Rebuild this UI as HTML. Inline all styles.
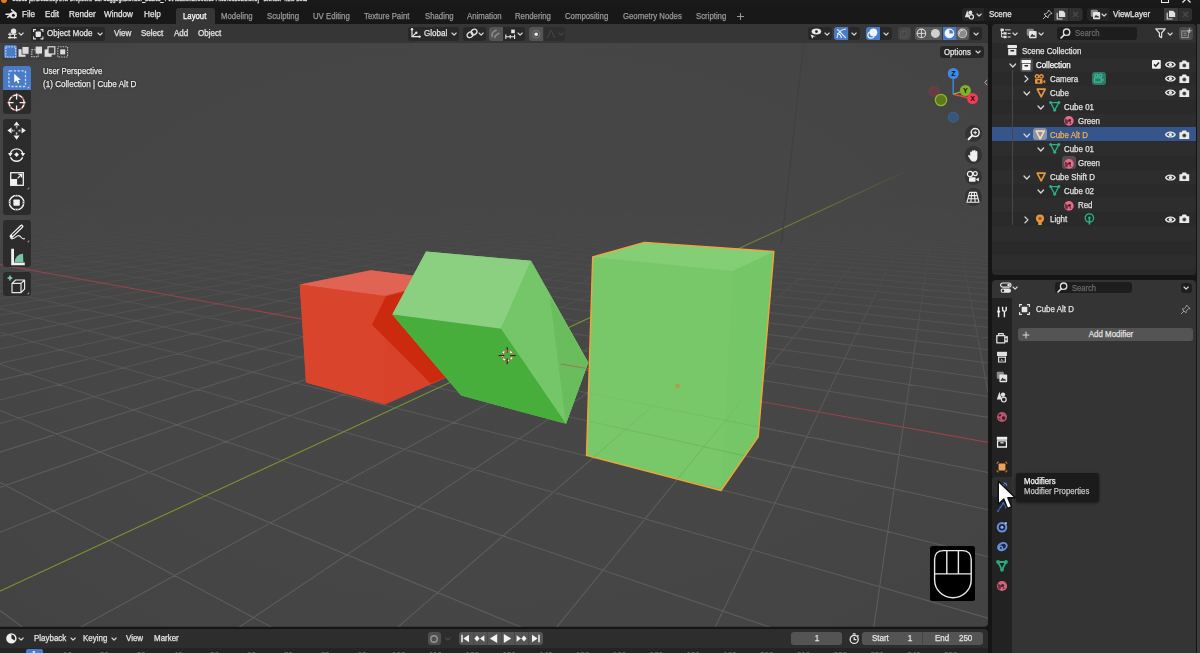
<!DOCTYPE html>
<html><head><meta charset="utf-8"><title>Blender</title>
<style>
html,body{margin:0;padding:0}
body{width:1200px;height:653px;position:relative;overflow:hidden;background:#151515;font-family:"Liberation Sans",sans-serif;font-size:9px;color:#e6e6e6}
div,svg{box-sizing:border-box}
svg{overflow:visible}
</style></head><body>
<svg style="position:absolute;left:0px;top:0px;" width="1200" height="653" viewBox="0 0 1200 653"><defs><clipPath id="vp"><rect x="-6" y="24" width="994" height="602.8" rx="4"/></clipPath><radialGradient id="vig" cx="0.5" cy="0.5" r="0.75"><stop offset="0" stop-color="#474747"/><stop offset="0.6" stop-color="#464646"/><stop offset="1" stop-color="#424242"/></radialGradient><linearGradient id="fade" x1="0" y1="0" x2="0" y2="1" gradientUnits="objectBoundingBox"><stop offset="0.0000" stop-color="rgb(0,0,0)"/><stop offset="0.2919" stop-color="rgb(0,0,0)"/><stop offset="0.3748" stop-color="rgb(38,38,38)"/><stop offset="0.4577" stop-color="rgb(107,107,107)"/><stop offset="0.5572" stop-color="rgb(183,183,183)"/><stop offset="0.7065" stop-color="rgb(242,242,242)"/><stop offset="0.8226" stop-color="rgb(255,255,255)"/><stop offset="1.0000" stop-color="rgb(255,255,255)"/></linearGradient><mask id="gm" maskUnits="userSpaceOnUse" x="0" y="24" width="988" height="603"><rect x="0" y="24" width="988" height="603" fill="url(#fade)"/></mask><linearGradient id="fade2" x1="0" y1="0" x2="0" y2="1" gradientUnits="objectBoundingBox"><stop offset="0.0000" stop-color="rgb(0,0,0)"/><stop offset="0.2388" stop-color="rgb(0,0,0)"/><stop offset="0.3167" stop-color="rgb(178,178,178)"/><stop offset="0.4411" stop-color="rgb(255,255,255)"/><stop offset="1.0000" stop-color="rgb(255,255,255)"/></linearGradient><mask id="am" maskUnits="userSpaceOnUse" x="0" y="24" width="988" height="603"><rect x="0" y="24" width="988" height="603" fill="url(#fade2)"/></mask><linearGradient id="fade3" x1="0" y1="380" x2="0" y2="450" gradientUnits="userSpaceOnUse"><stop offset="0" stop-color="#000"/><stop offset="1" stop-color="#fff"/></linearGradient><mask id="bm" maskUnits="userSpaceOnUse" x="0" y="24" width="988" height="603"><rect x="0" y="24" width="988" height="603" fill="url(#fade3)"/></mask></defs><g clip-path="url(#vp)"><rect x="0" y="24" width="988" height="603" fill="url(#vig)"/><g mask="url(#gm)"><path d="M-171566.5 6888.2L777.9 160.3M-169309.6 6888.2L779.9 160.3M-167052.8 6888.2L781.8 160.3M-164795.9 6888.2L783.8 160.3M-162539.0 6888.2L785.7 160.4M-160282.2 6888.2L787.7 160.4M-158025.3 6888.2L789.6 160.4M-155768.4 6888.2L791.6 160.4M-153511.6 6888.2L793.6 160.4M-151254.7 6888.2L795.6 160.4M-148997.8 6888.2L797.5 160.4M-146741.0 6888.2L799.5 160.4M-144484.1 6888.2L801.5 160.4M-142227.2 6888.2L803.5 160.4M-139970.4 6888.2L805.5 160.4M-137713.5 6888.2L807.5 160.5M-135456.6 6888.2L809.6 160.5M-133199.8 6888.2L811.6 160.5M-130942.9 6888.2L813.6 160.5M-128686.0 6888.2L815.7 160.5M-126429.2 6888.2L817.7 160.5M-124172.3 6888.2L819.7 160.5M-121915.4 6888.2L821.8 160.5M-119658.6 6888.2L823.9 160.5M-117401.7 6888.2L825.9 160.5M-115144.8 6888.2L828.0 160.6M-112888.0 6888.2L830.1 160.6M-110631.1 6888.2L832.1 160.6M-108374.2 6888.2L834.2 160.6M-106117.4 6888.2L836.3 160.6M-103860.5 6888.2L838.4 160.6M-101603.6 6888.2L840.5 160.6M-99346.8 6888.2L842.7 160.6M-97089.9 6888.2L844.8 160.6M-94833.0 6888.2L846.9 160.6M-92576.2 6888.2L849.0 160.6M-90319.3 6888.2L851.2 160.7M-88062.4 6888.2L853.3 160.7M-85805.6 6888.2L855.5 160.7M-83548.7 6888.2L857.6 160.7M-81291.8 6888.2L859.8 160.7M-79035.0 6888.2L862.0 160.7M-76778.1 6888.2L864.1 160.7M-74521.2 6888.2L866.3 160.7M-72264.4 6888.2L868.5 160.7M-70007.5 6888.2L870.7 160.7M-67750.6 6888.2L872.9 160.8M-65493.8 6888.2L875.1 160.8M-63236.9 6888.2L877.3 160.8M-60980.0 6888.2L879.5 160.8M-58723.2 6888.2L881.8 160.8M-56466.3 6888.2L884.0 160.8M-54209.4 6888.2L886.2 160.8M-51952.6 6888.2L888.5 160.8M-49695.7 6888.2L890.7 160.8M-47438.8 6888.2L893.0 160.9M-45182.0 6888.2L895.3 160.9M-42925.1 6888.2L897.5 160.9M-40668.2 6888.2L899.8 160.9M-38411.4 6888.2L902.1 160.9M-36154.5 6888.2L904.4 160.9M-33897.6 6888.2L906.7 160.9M-31640.8 6888.2L909.0 160.9M-29383.9 6888.2L911.3 160.9M-27127.0 6888.2L913.7 160.9M-24870.2 6888.2L916.0 161.0M-22613.3 6888.2L918.3 161.0M-20356.4 6888.2L920.7 161.0M-18099.6 6888.2L923.0 161.0M-15842.7 6888.2L925.4 161.0M-11329.0 6888.2L930.1 161.0M-9072.1 6888.2L932.5 161.0M-6815.2 6888.2L934.9 161.0M-4558.4 6888.2L937.3 161.1M-2301.5 6888.2L939.7 161.1M-44.6 6888.2L942.1 161.1M2212.2 6888.2L944.5 161.1M4469.1 6888.2L947.0 161.1M6726.0 6888.2L949.4 161.1M8982.8 6888.2L951.8 161.1M11239.7 6888.2L954.3 161.1M13496.6 6888.2L956.7 161.1M15753.4 6888.2L959.2 161.2M18010.3 6888.2L961.7 161.2M20267.2 6888.2L964.2 161.2M22524.0 6888.2L966.6 161.2M24780.9 6888.2L969.1 161.2M27037.8 6888.2L971.6 161.2M29294.6 6888.2L974.1 161.2M31551.5 6888.2L976.7 161.2M33808.4 6888.2L979.2 161.3M36065.2 6888.2L981.7 161.3M38322.1 6888.2L984.3 161.3M40579.0 6888.2L986.8 161.3M42835.8 6888.2L989.4 161.3M45092.7 6888.2L991.9 161.3M47349.6 6888.2L994.5 161.3M49606.4 6888.2L997.1 161.3M51863.3 6888.2L999.7 161.3M54120.2 6888.2L1002.3 161.4M56377.0 6888.2L1004.9 161.4M58633.9 6888.2L1007.5 161.4M60890.8 6888.2L1010.2 161.4M63147.6 6888.2L1012.8 161.4M65404.5 6888.2L1015.4 161.4M67661.4 6888.2L1018.1 161.4M69918.2 6888.2L1020.7 161.4M72175.1 6888.2L1023.4 161.5M74432.0 6888.2L1026.1 161.5M76688.8 6888.2L1028.8 161.5M78945.7 6888.2L1031.5 161.5M81202.6 6888.2L1034.2 161.5M83459.4 6888.2L1036.9 161.5M85716.3 6888.2L1039.6 161.5M87973.2 6888.2L1042.3 161.5M90230.0 6888.2L1045.1 161.6M92486.9 6888.2L1047.8 161.6M94743.8 6888.2L1050.6 161.6M97000.6 6888.2L1053.3 161.6M99257.5 6888.2L1056.1 161.6M101514.4 6888.2L1058.9 161.6M103771.2 6888.2L1061.7 161.6M106028.1 6888.2L1064.5 161.6M108285.0 6888.2L1067.3 161.7M110541.8 6888.2L1070.1 161.7M112798.7 6888.2L1073.0 161.7M115055.6 6888.2L1075.8 161.7M117312.4 6888.2L1078.7 161.7M119569.3 6888.2L1081.5 161.7M121826.2 6888.2L1084.4 161.7M124083.0 6888.2L1087.3 161.8M126339.9 6888.2L1090.2 161.8M128596.8 6888.2L1093.1 161.8M130853.6 6888.2L1096.0 161.8M133110.5 6888.2L1098.9 161.8M135367.4 6888.2L1101.8 161.8M137624.2 6888.2L1104.8 161.8M139881.1 6888.2L1107.7 161.8M142138.0 6888.2L1110.7 161.9M144394.8 6888.2L1113.7 161.9M-211351.1 6888.2L-1081.5 168.7M-207805.6 6888.2L-1071.3 168.7M-204260.0 6888.2L-1061.3 168.6M-200714.4 6888.2L-1051.4 168.5M-197168.9 6888.2L-1041.6 168.4M-193623.3 6888.2L-1031.9 168.4M-190077.8 6888.2L-1022.3 168.3M-186532.2 6888.2L-1012.8 168.2M-182986.7 6888.2L-1003.3 168.2M-179441.1 6888.2L-994.0 168.1M-175895.6 6888.2L-984.7 168.0M-172350.0 6888.2L-975.5 168.0M-168804.5 6888.2L-966.5 167.9M-165258.9 6888.2L-957.5 167.8M-161713.4 6888.2L-948.6 167.8M-158167.8 6888.2L-939.7 167.7M-154622.2 6888.2L-931.0 167.6M-151076.7 6888.2L-922.3 167.6M-147531.1 6888.2L-913.7 167.5M-143985.6 6888.2L-905.2 167.4M-140440.0 6888.2L-896.8 167.4M-136894.5 6888.2L-888.4 167.3M-133348.9 6888.2L-880.2 167.3M-129803.4 6888.2L-872.0 167.2M-126257.8 6888.2L-863.8 167.1M-122712.3 6888.2L-855.8 167.1M-119166.7 6888.2L-847.8 167.0M-115621.1 6888.2L-839.9 167.0M-112075.6 6888.2L-832.0 166.9M-108530.0 6888.2L-824.2 166.8M-104984.5 6888.2L-816.5 166.8M-101438.9 6888.2L-808.9 166.7M-97893.4 6888.2L-801.3 166.7M-94347.8 6888.2L-793.8 166.6M-90802.3 6888.2L-786.4 166.6M-87256.7 6888.2L-779.0 166.5M-83711.2 6888.2L-771.7 166.5M-80165.6 6888.2L-764.4 166.4M-76620.1 6888.2L-757.2 166.4M-73074.5 6888.2L-750.1 166.3M-69528.9 6888.2L-743.0 166.2M-65983.4 6888.2L-736.0 166.2M-62437.8 6888.2L-729.0 166.1M-58892.3 6888.2L-722.1 166.1M-55346.7 6888.2L-715.3 166.0M-51801.2 6888.2L-708.5 166.0M-48255.6 6888.2L-701.7 165.9M-44710.1 6888.2L-695.1 165.9M-41164.5 6888.2L-688.4 165.8M-37619.0 6888.2L-681.9 165.8M-34073.4 6888.2L-675.4 165.8M-30527.8 6888.2L-668.9 165.7M-26982.3 6888.2L-662.5 165.7M-23436.7 6888.2L-656.1 165.6M-19891.2 6888.2L-649.8 165.6M-16345.6 6888.2L-643.5 165.5M-12800.1 6888.2L-637.3 165.5M-9254.5 6888.2L-631.1 165.4M-5709.0 6888.2L-625.0 165.4M-2163.4 6888.2L-619.0 165.3M1382.1 6888.2L-612.9 165.3M4927.7 6888.2L-607.0 165.3M8473.2 6888.2L-601.0 165.2M12018.8 6888.2L-595.1 165.2M15564.4 6888.2L-589.3 165.1M19109.9 6888.2L-583.5 165.1M22655.5 6888.2L-577.7 165.0M26201.0 6888.2L-572.0 165.0M29746.6 6888.2L-566.4 165.0M33292.1 6888.2L-560.7 164.9M40383.2 6888.2L-549.6 164.8M43928.8 6888.2L-544.1 164.8M47474.3 6888.2L-538.6 164.7M51019.9 6888.2L-533.2 164.7M54565.5 6888.2L-527.8 164.7M58111.0 6888.2L-522.5 164.6M61656.6 6888.2L-517.2 164.6M65202.1 6888.2L-511.9 164.6M68747.7 6888.2L-506.7 164.5M72293.2 6888.2L-501.5 164.5M75838.8 6888.2L-496.3 164.4M79384.3 6888.2L-491.2 164.4M82929.9 6888.2L-486.1 164.4M86475.4 6888.2L-481.1 164.3M90021.0 6888.2L-476.1 164.3M93566.5 6888.2L-471.1 164.3M97112.1 6888.2L-466.2 164.2M100657.7 6888.2L-461.3 164.2M104203.2 6888.2L-456.4 164.1M107748.8 6888.2L-451.6 164.1M111294.3 6888.2L-446.7 164.1M114839.9 6888.2L-442.0 164.0M118385.4 6888.2L-437.2 164.0M121931.0 6888.2L-432.5 164.0M125476.5 6888.2L-427.9 163.9M129022.1 6888.2L-423.2 163.9M132567.6 6888.2L-418.6 163.9M136113.2 6888.2L-414.0 163.8M139658.7 6888.2L-409.5 163.8M143204.3 6888.2L-404.9 163.8M146749.9 6888.2L-400.5 163.7M150295.4 6888.2L-396.0 163.7M153841.0 6888.2L-391.6 163.7M157386.5 6888.2L-387.2 163.6M160932.1 6888.2L-382.8 163.6M164477.6 6888.2L-378.5 163.6M168023.2 6888.2L-374.1 163.5M171568.7 6888.2L-369.8 163.5M175114.3 6888.2L-365.6 163.5M178659.8 6888.2L-361.4 163.4M182205.4 6888.2L-357.2 163.4M185751.0 6888.2L-353.0 163.4M189296.5 6888.2L-348.8 163.4M192842.1 6888.2L-344.7 163.3M196387.6 6888.2L-340.6 163.3M199933.2 6888.2L-336.5 163.3M203478.7 6888.2L-332.5 163.2M207024.3 6888.2L-328.5 163.2M210569.8 6888.2L-324.5 163.2M214115.4 6888.2L-320.5 163.1M217660.9 6888.2L-316.6 163.1M221206.5 6888.2L-312.6 163.1M224752.0 6888.2L-308.7 163.1M228297.6 6888.2L-304.9 163.0M231843.2 6888.2L-301.0 163.0M235388.7 6888.2L-297.2 163.0M238934.3 6888.2L-293.4 162.9M242479.8 6888.2L-289.6 162.9M246025.4 6888.2L-285.9 162.9M249570.9 6888.2L-282.1 162.9M253116.5 6888.2L-278.4 162.8M256662.0 6888.2L-274.7 162.8M260207.6 6888.2L-271.1 162.8M263753.1 6888.2L-267.4 162.8M267298.7 6888.2L-263.8 162.7M270844.3 6888.2L-260.2 162.7M274389.8 6888.2L-256.6 162.7M277935.4 6888.2L-253.1 162.7M281480.9 6888.2L-249.5 162.6M285026.5 6888.2L-246.0 162.6" stroke="#626262" stroke-width="1.05" fill="none" opacity="0.85"/></g><g mask="url(#am)"><path d="M-13585.8 6888.2L927.8 161.0" stroke="#78932f" stroke-width="1.15" fill="none"/><path d="M36837.7 6888.2L-555.1 164.9" stroke="#96434c" stroke-width="1.15" fill="none"/></g><path d="M804 40L781.5 243" stroke="#3f3f3f" stroke-width="1" fill="none"/><polygon points="299.8,284.5 370.8,270.3 462.0,281.8 462.0,370.5 384.9,404.4 306.0,382.5" fill="#d9442b"/><polygon points="299.8,284.5 370.8,270.3 462.0,281.8 462.0,276.5 384.3,296.1" fill="#e06354"/><polygon points="299.8,284.5 384.3,296.1 384.9,404.4 306.0,382.5" fill="#d9452c"/><polygon points="384.3,296.1 462.0,276.5 462.0,370.5 384.9,404.4" fill="#d8422a"/><polygon points="385.9,296.5 371.9,324.8 430.6,383.4 462.0,370.5 462.0,277.0" fill="#cc2a0e"/><polygon points="426.0,251.6 531.0,260.8 588.3,362.5 566.0,423.8 461.2,395.6 392.3,314.4" fill="#6cc060"/><polygon points="426.0,251.6 531.0,260.8 501.0,328.8 392.3,314.4" fill="#8bcf80"/><polygon points="531.0,260.8 588.3,362.5 566.0,423.8 501.0,328.8" fill="#74c668"/><polygon points="550.0,297.0 588.3,362.5 566.0,423.8" fill="#69bd5c"/><polygon points="392.3,314.4 501.0,328.8 566.0,423.8 461.2,395.6" fill="#47ad3b"/><path d="M560.8 364L588 368.7" stroke="#a86a50" stroke-width="1" opacity="0.8"/><polygon points="592.7,256.9 644.4,242.4 773.9,251.5 758.2,436.8 721.0,490.5 586.5,455.4" fill="#78c86a"/><polygon points="592.7,256.9 644.4,242.4 773.9,251.5 733.0,271.0" fill="#84cf76"/><polygon points="733.0,271.0 773.9,251.5 758.2,436.8 721.0,490.5" fill="#75c667"/><clipPath id="bx"><polygon points="592.7,256.9 644.4,242.4 773.9,251.5 758.2,436.8 721.0,490.5 586.5,455.4"/></clipPath><g clip-path="url(#bx)"><path d="M-171566.5 6888.2L777.9 160.3M-169309.6 6888.2L779.9 160.3M-167052.8 6888.2L781.8 160.3M-164795.9 6888.2L783.8 160.3M-162539.0 6888.2L785.7 160.4M-160282.2 6888.2L787.7 160.4M-158025.3 6888.2L789.6 160.4M-155768.4 6888.2L791.6 160.4M-153511.6 6888.2L793.6 160.4M-151254.7 6888.2L795.6 160.4M-148997.8 6888.2L797.5 160.4M-146741.0 6888.2L799.5 160.4M-144484.1 6888.2L801.5 160.4M-142227.2 6888.2L803.5 160.4M-139970.4 6888.2L805.5 160.4M-137713.5 6888.2L807.5 160.5M-135456.6 6888.2L809.6 160.5M-133199.8 6888.2L811.6 160.5M-130942.9 6888.2L813.6 160.5M-128686.0 6888.2L815.7 160.5M-126429.2 6888.2L817.7 160.5M-124172.3 6888.2L819.7 160.5M-121915.4 6888.2L821.8 160.5M-119658.6 6888.2L823.9 160.5M-117401.7 6888.2L825.9 160.5M-115144.8 6888.2L828.0 160.6M-112888.0 6888.2L830.1 160.6M-110631.1 6888.2L832.1 160.6M-108374.2 6888.2L834.2 160.6M-106117.4 6888.2L836.3 160.6M-103860.5 6888.2L838.4 160.6M-101603.6 6888.2L840.5 160.6M-99346.8 6888.2L842.7 160.6M-97089.9 6888.2L844.8 160.6M-94833.0 6888.2L846.9 160.6M-92576.2 6888.2L849.0 160.6M-90319.3 6888.2L851.2 160.7M-88062.4 6888.2L853.3 160.7M-85805.6 6888.2L855.5 160.7M-83548.7 6888.2L857.6 160.7M-81291.8 6888.2L859.8 160.7M-79035.0 6888.2L862.0 160.7M-76778.1 6888.2L864.1 160.7M-74521.2 6888.2L866.3 160.7M-72264.4 6888.2L868.5 160.7M-70007.5 6888.2L870.7 160.7M-67750.6 6888.2L872.9 160.8M-65493.8 6888.2L875.1 160.8M-63236.9 6888.2L877.3 160.8M-60980.0 6888.2L879.5 160.8M-58723.2 6888.2L881.8 160.8M-56466.3 6888.2L884.0 160.8M-54209.4 6888.2L886.2 160.8M-51952.6 6888.2L888.5 160.8M-49695.7 6888.2L890.7 160.8M-47438.8 6888.2L893.0 160.9M-45182.0 6888.2L895.3 160.9M-42925.1 6888.2L897.5 160.9M-40668.2 6888.2L899.8 160.9M-38411.4 6888.2L902.1 160.9M-36154.5 6888.2L904.4 160.9M-33897.6 6888.2L906.7 160.9M-31640.8 6888.2L909.0 160.9M-29383.9 6888.2L911.3 160.9M-27127.0 6888.2L913.7 160.9M-24870.2 6888.2L916.0 161.0M-22613.3 6888.2L918.3 161.0M-20356.4 6888.2L920.7 161.0M-18099.6 6888.2L923.0 161.0M-15842.7 6888.2L925.4 161.0M-11329.0 6888.2L930.1 161.0M-9072.1 6888.2L932.5 161.0M-6815.2 6888.2L934.9 161.0M-4558.4 6888.2L937.3 161.1M-2301.5 6888.2L939.7 161.1M-44.6 6888.2L942.1 161.1M2212.2 6888.2L944.5 161.1M4469.1 6888.2L947.0 161.1M6726.0 6888.2L949.4 161.1M8982.8 6888.2L951.8 161.1M11239.7 6888.2L954.3 161.1M13496.6 6888.2L956.7 161.1M15753.4 6888.2L959.2 161.2M18010.3 6888.2L961.7 161.2M20267.2 6888.2L964.2 161.2M22524.0 6888.2L966.6 161.2M24780.9 6888.2L969.1 161.2M27037.8 6888.2L971.6 161.2M29294.6 6888.2L974.1 161.2M31551.5 6888.2L976.7 161.2M33808.4 6888.2L979.2 161.3M36065.2 6888.2L981.7 161.3M38322.1 6888.2L984.3 161.3M40579.0 6888.2L986.8 161.3M42835.8 6888.2L989.4 161.3M45092.7 6888.2L991.9 161.3M47349.6 6888.2L994.5 161.3M49606.4 6888.2L997.1 161.3M51863.3 6888.2L999.7 161.3M54120.2 6888.2L1002.3 161.4M56377.0 6888.2L1004.9 161.4M58633.9 6888.2L1007.5 161.4M60890.8 6888.2L1010.2 161.4M63147.6 6888.2L1012.8 161.4M65404.5 6888.2L1015.4 161.4M67661.4 6888.2L1018.1 161.4M69918.2 6888.2L1020.7 161.4M72175.1 6888.2L1023.4 161.5M74432.0 6888.2L1026.1 161.5M76688.8 6888.2L1028.8 161.5M78945.7 6888.2L1031.5 161.5M81202.6 6888.2L1034.2 161.5M83459.4 6888.2L1036.9 161.5M85716.3 6888.2L1039.6 161.5M87973.2 6888.2L1042.3 161.5M90230.0 6888.2L1045.1 161.6M92486.9 6888.2L1047.8 161.6M94743.8 6888.2L1050.6 161.6M97000.6 6888.2L1053.3 161.6M99257.5 6888.2L1056.1 161.6M101514.4 6888.2L1058.9 161.6M103771.2 6888.2L1061.7 161.6M106028.1 6888.2L1064.5 161.6M108285.0 6888.2L1067.3 161.7M110541.8 6888.2L1070.1 161.7M112798.7 6888.2L1073.0 161.7M115055.6 6888.2L1075.8 161.7M117312.4 6888.2L1078.7 161.7M119569.3 6888.2L1081.5 161.7M121826.2 6888.2L1084.4 161.7M124083.0 6888.2L1087.3 161.8M126339.9 6888.2L1090.2 161.8M128596.8 6888.2L1093.1 161.8M130853.6 6888.2L1096.0 161.8M133110.5 6888.2L1098.9 161.8M135367.4 6888.2L1101.8 161.8M137624.2 6888.2L1104.8 161.8M139881.1 6888.2L1107.7 161.8M142138.0 6888.2L1110.7 161.9M144394.8 6888.2L1113.7 161.9M-211351.1 6888.2L-1081.5 168.7M-207805.6 6888.2L-1071.3 168.7M-204260.0 6888.2L-1061.3 168.6M-200714.4 6888.2L-1051.4 168.5M-197168.9 6888.2L-1041.6 168.4M-193623.3 6888.2L-1031.9 168.4M-190077.8 6888.2L-1022.3 168.3M-186532.2 6888.2L-1012.8 168.2M-182986.7 6888.2L-1003.3 168.2M-179441.1 6888.2L-994.0 168.1M-175895.6 6888.2L-984.7 168.0M-172350.0 6888.2L-975.5 168.0M-168804.5 6888.2L-966.5 167.9M-165258.9 6888.2L-957.5 167.8M-161713.4 6888.2L-948.6 167.8M-158167.8 6888.2L-939.7 167.7M-154622.2 6888.2L-931.0 167.6M-151076.7 6888.2L-922.3 167.6M-147531.1 6888.2L-913.7 167.5M-143985.6 6888.2L-905.2 167.4M-140440.0 6888.2L-896.8 167.4M-136894.5 6888.2L-888.4 167.3M-133348.9 6888.2L-880.2 167.3M-129803.4 6888.2L-872.0 167.2M-126257.8 6888.2L-863.8 167.1M-122712.3 6888.2L-855.8 167.1M-119166.7 6888.2L-847.8 167.0M-115621.1 6888.2L-839.9 167.0M-112075.6 6888.2L-832.0 166.9M-108530.0 6888.2L-824.2 166.8M-104984.5 6888.2L-816.5 166.8M-101438.9 6888.2L-808.9 166.7M-97893.4 6888.2L-801.3 166.7M-94347.8 6888.2L-793.8 166.6M-90802.3 6888.2L-786.4 166.6M-87256.7 6888.2L-779.0 166.5M-83711.2 6888.2L-771.7 166.5M-80165.6 6888.2L-764.4 166.4M-76620.1 6888.2L-757.2 166.4M-73074.5 6888.2L-750.1 166.3M-69528.9 6888.2L-743.0 166.2M-65983.4 6888.2L-736.0 166.2M-62437.8 6888.2L-729.0 166.1M-58892.3 6888.2L-722.1 166.1M-55346.7 6888.2L-715.3 166.0M-51801.2 6888.2L-708.5 166.0M-48255.6 6888.2L-701.7 165.9M-44710.1 6888.2L-695.1 165.9M-41164.5 6888.2L-688.4 165.8M-37619.0 6888.2L-681.9 165.8M-34073.4 6888.2L-675.4 165.8M-30527.8 6888.2L-668.9 165.7M-26982.3 6888.2L-662.5 165.7M-23436.7 6888.2L-656.1 165.6M-19891.2 6888.2L-649.8 165.6M-16345.6 6888.2L-643.5 165.5M-12800.1 6888.2L-637.3 165.5M-9254.5 6888.2L-631.1 165.4M-5709.0 6888.2L-625.0 165.4M-2163.4 6888.2L-619.0 165.3M1382.1 6888.2L-612.9 165.3M4927.7 6888.2L-607.0 165.3M8473.2 6888.2L-601.0 165.2M12018.8 6888.2L-595.1 165.2M15564.4 6888.2L-589.3 165.1M19109.9 6888.2L-583.5 165.1M22655.5 6888.2L-577.7 165.0M26201.0 6888.2L-572.0 165.0M29746.6 6888.2L-566.4 165.0M33292.1 6888.2L-560.7 164.9M40383.2 6888.2L-549.6 164.8M43928.8 6888.2L-544.1 164.8M47474.3 6888.2L-538.6 164.7M51019.9 6888.2L-533.2 164.7M54565.5 6888.2L-527.8 164.7M58111.0 6888.2L-522.5 164.6M61656.6 6888.2L-517.2 164.6M65202.1 6888.2L-511.9 164.6M68747.7 6888.2L-506.7 164.5M72293.2 6888.2L-501.5 164.5M75838.8 6888.2L-496.3 164.4M79384.3 6888.2L-491.2 164.4M82929.9 6888.2L-486.1 164.4M86475.4 6888.2L-481.1 164.3M90021.0 6888.2L-476.1 164.3M93566.5 6888.2L-471.1 164.3M97112.1 6888.2L-466.2 164.2M100657.7 6888.2L-461.3 164.2M104203.2 6888.2L-456.4 164.1M107748.8 6888.2L-451.6 164.1M111294.3 6888.2L-446.7 164.1M114839.9 6888.2L-442.0 164.0M118385.4 6888.2L-437.2 164.0M121931.0 6888.2L-432.5 164.0M125476.5 6888.2L-427.9 163.9M129022.1 6888.2L-423.2 163.9M132567.6 6888.2L-418.6 163.9M136113.2 6888.2L-414.0 163.8M139658.7 6888.2L-409.5 163.8M143204.3 6888.2L-404.9 163.8M146749.9 6888.2L-400.5 163.7M150295.4 6888.2L-396.0 163.7M153841.0 6888.2L-391.6 163.7M157386.5 6888.2L-387.2 163.6M160932.1 6888.2L-382.8 163.6M164477.6 6888.2L-378.5 163.6M168023.2 6888.2L-374.1 163.5M171568.7 6888.2L-369.8 163.5M175114.3 6888.2L-365.6 163.5M178659.8 6888.2L-361.4 163.4M182205.4 6888.2L-357.2 163.4M185751.0 6888.2L-353.0 163.4M189296.5 6888.2L-348.8 163.4M192842.1 6888.2L-344.7 163.3M196387.6 6888.2L-340.6 163.3M199933.2 6888.2L-336.5 163.3M203478.7 6888.2L-332.5 163.2M207024.3 6888.2L-328.5 163.2M210569.8 6888.2L-324.5 163.2M214115.4 6888.2L-320.5 163.1M217660.9 6888.2L-316.6 163.1M221206.5 6888.2L-312.6 163.1M224752.0 6888.2L-308.7 163.1M228297.6 6888.2L-304.9 163.0M231843.2 6888.2L-301.0 163.0M235388.7 6888.2L-297.2 163.0M238934.3 6888.2L-293.4 162.9M242479.8 6888.2L-289.6 162.9M246025.4 6888.2L-285.9 162.9M249570.9 6888.2L-282.1 162.9M253116.5 6888.2L-278.4 162.8M256662.0 6888.2L-274.7 162.8M260207.6 6888.2L-271.1 162.8M263753.1 6888.2L-267.4 162.8M267298.7 6888.2L-263.8 162.7M270844.3 6888.2L-260.2 162.7M274389.8 6888.2L-256.6 162.7M277935.4 6888.2L-253.1 162.7M281480.9 6888.2L-249.5 162.6M285026.5 6888.2L-246.0 162.6" stroke="#5f9f55" stroke-width="0.9" fill="none" opacity="0.5" mask="url(#bm)"/></g><polygon points="592.7,256.9 644.4,242.4 773.9,251.5 758.2,436.8 721.0,490.5 586.5,455.4" fill="none" stroke="#f2a43c" stroke-width="1.4" stroke-linejoin="round"/><circle cx="677.5" cy="386" r="1.7" fill="none" stroke="#e8742a" stroke-width="0.9"/><g transform="translate(507.2,355.6)"><circle r="5" fill="none" stroke="#fff" stroke-width="1.3"/><circle r="5" fill="none" stroke="#e03030" stroke-width="1.3" stroke-dasharray="2 2"/><path d="M-8.5 0H-3M3 0H8.5M0 -8.5V-3M0 3V8.5" stroke="#1a1a1a" stroke-width="1"/></g></g></svg>
<div style="position:absolute;left:0px;top:0px;width:1200px;height:4.5px;background:#1a1a1a;border-radius:0px;"></div>
<div style="position:absolute;left:0;top:0;width:1200px;height:4.5px;overflow:hidden"><div style="position:absolute;left:1px;top:-3px;width:6px;height:6px;background:#e87d0d;border-radius:3px"></div><div style="position:absolute;left:12px;top:-4.6px;font-size:7.5px;line-height:8px;color:#e8e8e8;white-space:nowrap;transform:scaleX(0.70);transform-origin:0 0;-webkit-text-stroke:0.3px #e8e8e8">Cubes [E:\Dessktop\Inc. Dropbox\Paul Caggegi\Blender_Basics_4-0\Additional\Course Files\Cubes.blend] - Blender 4.2.0 Beta</div><div style="position:absolute;left:1161px;top:-4px;width:8px;height:7px;border:1.3px solid #eee"></div><svg style="position:absolute;left:1182px;top:-6px" width="9" height="9"><path d="M0.5 0.5L8.5 8.5M8.5 0.5L0.5 8.5" stroke="#eee" stroke-width="1.3"/></svg></div>
<div style="position:absolute;left:0px;top:4.5px;width:1200px;height:19.5px;background:#181818;border-radius:0px;"></div>
<svg style="position:absolute;left:5px;top:9px;" width="13" height="11" viewBox="0 0 13 11"><path d="M6.6 0.8L11 4.3M1 5.2H6.5M2.8 8.2L5.3 6.2" stroke="#e8e8e8" stroke-width="1.5" fill="none" stroke-linecap="round"/><ellipse cx="8.3" cy="6.2" rx="3.6" ry="3.3" fill="#e8e8e8"/><circle cx="8.4" cy="6.2" r="1.5" fill="#181818"/></svg>
<div style="position:absolute;left:22.3px;top:9.20px;font-size:9px;line-height:10.80px;color:#e6e6e6;white-space:nowrap;-webkit-text-stroke:0.25px #e6e6e6;transform:scaleX(0.905);transform-origin:0 50%;">File</div>
<div style="position:absolute;left:45.3px;top:9.20px;font-size:9px;line-height:10.80px;color:#e6e6e6;white-space:nowrap;-webkit-text-stroke:0.25px #e6e6e6;transform:scaleX(0.905);transform-origin:0 50%;">Edit</div>
<div style="position:absolute;left:68.8px;top:9.20px;font-size:9px;line-height:10.80px;color:#e6e6e6;white-space:nowrap;-webkit-text-stroke:0.25px #e6e6e6;transform:scaleX(0.905);transform-origin:0 50%;">Render</div>
<div style="position:absolute;left:104.3px;top:9.20px;font-size:9px;line-height:10.80px;color:#e6e6e6;white-space:nowrap;-webkit-text-stroke:0.25px #e6e6e6;transform:scaleX(0.905);transform-origin:0 50%;">Window</div>
<div style="position:absolute;left:143.6px;top:9.20px;font-size:9px;line-height:10.80px;color:#e6e6e6;white-space:nowrap;-webkit-text-stroke:0.25px #e6e6e6;transform:scaleX(0.905);transform-origin:0 50%;">Help</div>
<div style="position:absolute;left:176px;top:8px;width:38.5px;height:16px;background:#363636;border-radius:0px;border-radius:3px 3px 0 0"></div>
<div style="position:absolute;left:183px;top:11.14px;font-size:8.6px;line-height:10.32px;color:#ffffff;white-space:nowrap;-webkit-text-stroke:0.25px #ffffff;transform:scaleX(0.905);transform-origin:0 50%;">Layout</div>
<div style="position:absolute;left:220.5px;top:11.14px;font-size:8.6px;line-height:10.32px;color:#9a9a9a;white-space:nowrap;-webkit-text-stroke:0.25px #9a9a9a;transform:scaleX(0.905);transform-origin:0 50%;">Modeling</div>
<div style="position:absolute;left:267px;top:11.14px;font-size:8.6px;line-height:10.32px;color:#9a9a9a;white-space:nowrap;-webkit-text-stroke:0.25px #9a9a9a;transform:scaleX(0.905);transform-origin:0 50%;">Sculpting</div>
<div style="position:absolute;left:313px;top:11.14px;font-size:8.6px;line-height:10.32px;color:#9a9a9a;white-space:nowrap;-webkit-text-stroke:0.25px #9a9a9a;transform:scaleX(0.905);transform-origin:0 50%;">UV Editing</div>
<div style="position:absolute;left:364px;top:11.14px;font-size:8.6px;line-height:10.32px;color:#9a9a9a;white-space:nowrap;-webkit-text-stroke:0.25px #9a9a9a;transform:scaleX(0.905);transform-origin:0 50%;">Texture Paint</div>
<div style="position:absolute;left:424.5px;top:11.14px;font-size:8.6px;line-height:10.32px;color:#9a9a9a;white-space:nowrap;-webkit-text-stroke:0.25px #9a9a9a;transform:scaleX(0.905);transform-origin:0 50%;">Shading</div>
<div style="position:absolute;left:466.5px;top:11.14px;font-size:8.6px;line-height:10.32px;color:#9a9a9a;white-space:nowrap;-webkit-text-stroke:0.25px #9a9a9a;transform:scaleX(0.905);transform-origin:0 50%;">Animation</div>
<div style="position:absolute;left:515px;top:11.14px;font-size:8.6px;line-height:10.32px;color:#9a9a9a;white-space:nowrap;-webkit-text-stroke:0.25px #9a9a9a;transform:scaleX(0.905);transform-origin:0 50%;">Rendering</div>
<div style="position:absolute;left:565px;top:11.14px;font-size:8.6px;line-height:10.32px;color:#9a9a9a;white-space:nowrap;-webkit-text-stroke:0.25px #9a9a9a;transform:scaleX(0.905);transform-origin:0 50%;">Compositing</div>
<div style="position:absolute;left:622.5px;top:11.14px;font-size:8.6px;line-height:10.32px;color:#9a9a9a;white-space:nowrap;-webkit-text-stroke:0.25px #9a9a9a;transform:scaleX(0.905);transform-origin:0 50%;">Geometry Nodes</div>
<div style="position:absolute;left:696px;top:11.14px;font-size:8.6px;line-height:10.32px;color:#9a9a9a;white-space:nowrap;-webkit-text-stroke:0.25px #9a9a9a;transform:scaleX(0.905);transform-origin:0 50%;">Scripting</div>
<svg style="position:absolute;left:736px;top:12px;" width="9" height="9" viewBox="0 0 9 9"><path d="M4.5 1V8M1 4.5H8" stroke="#9a9a9a" stroke-width="1"/></svg>
<div style="position:absolute;left:961.5px;top:7.5px;width:121px;height:13.5px;background:#252525;border-radius:3px;"></div>
<div style="position:absolute;left:983.5px;top:7.5px;width:70px;height:13.5px;background:#1d1d1d;border-radius:0px;"></div>
<div style="position:absolute;left:1053.8px;top:7.5px;width:14.6px;height:13.5px;background:#3c3c3c;border-radius:0px;"></div>
<div style="position:absolute;left:1068.8px;top:7.5px;width:13.7px;height:13.5px;background:#303030;border-radius:0px;border-radius:0 3px 3px 0"></div>
<svg style="position:absolute;left:963.5px;top:9px;" width="11" height="11" viewBox="0 0 11 11"><path d="M3.2 1.2L0.8 8.2H5.6Z" fill="#e0e0e0"/><circle cx="6.3" cy="3.6" r="2" fill="#e0e0e0"/><circle cx="7.3" cy="7.8" r="2.2" fill="none" stroke="#e0e0e0" stroke-width="1.2"/></svg>
<svg style="position:absolute;left:975.6px;top:12.5px" width="6.2" height="4.2" viewBox="-3.1 -2.1 6.2 4.2"><path d="M-2.1 -1.1 L0 1.1 L2.1 -1.1" fill="none" stroke="#d8d8d8" stroke-width="1.15" stroke-linecap="round" stroke-linejoin="round"/></svg>
<div style="position:absolute;left:989px;top:9.12px;font-size:8.8px;line-height:10.56px;color:#e6e6e6;white-space:nowrap;-webkit-text-stroke:0.25px #e6e6e6;transform:scaleX(0.905);transform-origin:0 50%;">Scene</div>
<svg style="position:absolute;left:1041.5px;top:9px;" width="11" height="11" viewBox="0 0 11 11"><path d="M6.5 1L10 4.5L8.2 5L6.2 7L6 9L2 5L4 4.8L6 2.8ZM4 7L1 10" stroke="#b8b8b8" stroke-width="1" fill="none" stroke-linejoin="round"/></svg>
<svg style="position:absolute;left:1056px;top:9.5px;" width="10" height="10" viewBox="0 0 10 10"><path d="M3 0.8H7L9.2 3V7H3Z" fill="#e0e0e0"/><path d="M1.2 2.8V9H6.5" stroke="#e0e0e0" stroke-width="1.1" fill="none"/></svg>
<svg style="position:absolute;left:1072px;top:11px;" width="7" height="7" viewBox="0 0 7 7"><path d="M1 1L6 6M6 1L1 6" stroke="#4a4a4a" stroke-width="1.2"/></svg>
<div style="position:absolute;left:1087.3px;top:7.5px;width:105.2px;height:13.5px;background:#252525;border-radius:3px;"></div>
<div style="position:absolute;left:1109px;top:7.5px;width:54.5px;height:13.5px;background:#1d1d1d;border-radius:0px;"></div>
<div style="position:absolute;left:1163.5px;top:7.5px;width:14.6px;height:13.5px;background:#3c3c3c;border-radius:0px;"></div>
<div style="position:absolute;left:1178.6px;top:7.5px;width:13.9px;height:13.5px;background:#303030;border-radius:0px;border-radius:0 3px 3px 0"></div>
<svg style="position:absolute;left:1089.5px;top:9px;" width="11" height="11" viewBox="0 0 11 11"><rect x="0.8" y="0.8" width="7" height="7" rx="1" fill="#8a8a8a"/><rect x="3" y="3" width="7.2" height="7.2" rx="1" fill="#e6e6e6"/><path d="M4 8.5L6 5.8L7.3 7.3L8 6.6L9.3 8.5Z" fill="#333"/></svg>
<svg style="position:absolute;left:1100.6000000000001px;top:12.5px" width="6.2" height="4.2" viewBox="-3.1 -2.1 6.2 4.2"><path d="M-2.1 -1.1 L0 1.1 L2.1 -1.1" fill="none" stroke="#d8d8d8" stroke-width="1.15" stroke-linecap="round" stroke-linejoin="round"/></svg>
<div style="position:absolute;left:1113.3px;top:9.12px;font-size:8.8px;line-height:10.56px;color:#e6e6e6;white-space:nowrap;-webkit-text-stroke:0.25px #e6e6e6;transform:scaleX(0.905);transform-origin:0 50%;">ViewLayer</div>
<svg style="position:absolute;left:1166px;top:9.5px;" width="10" height="10" viewBox="0 0 10 10"><path d="M3 0.8H7L9.2 3V7H3Z" fill="#e0e0e0"/><path d="M1.2 2.8V9H6.5" stroke="#e0e0e0" stroke-width="1.1" fill="none"/></svg>
<svg style="position:absolute;left:1182px;top:11px;" width="7" height="7" viewBox="0 0 7 7"><path d="M1 1L6 6M6 1L1 6" stroke="#4a4a4a" stroke-width="1.2"/></svg>
<div style="position:absolute;left:-6px;top:24px;width:994px;height:18.5px;background:#363636;border-radius:0px;border-radius:4px 4px 0 0"></div>
<svg style="position:absolute;left:6.5px;top:27.5px;" width="11" height="11" viewBox="0 0 11 11"><circle cx="6.6" cy="3.2" r="2.7" fill="#e6e6e6"/><path d="M1 6.2H9.8M1 9.6H9.8M3 4.6V10.8M7.6 6V10.8" stroke="#e6e6e6" stroke-width="1.1" fill="none"/></svg>
<svg style="position:absolute;left:17.599999999999998px;top:31.5px" width="6.2" height="4.2" viewBox="-3.1 -2.1 6.2 4.2"><path d="M-2.1 -1.1 L0 1.1 L2.1 -1.1" fill="none" stroke="#d8d8d8" stroke-width="1.15" stroke-linecap="round" stroke-linejoin="round"/></svg>
<div style="position:absolute;left:30.5px;top:27px;width:74px;height:13.5px;background:#282828;border-radius:3px;"></div>
<svg style="position:absolute;left:33px;top:28.5px;" width="10.5" height="10.5" viewBox="0 0 10.5 10.5"><path d="M0.6 3V0.6H3M7.5 0.6H9.9V3M9.9 7.5V9.9H7.5M3 9.9H0.6V7.5" stroke="#e6e6e6" stroke-width="1.1" fill="none"/><rect x="2.6" y="2.6" width="5.3" height="5.3" rx="0.8" fill="#e6e6e6"/></svg>
<div style="position:absolute;left:47px;top:28.06px;font-size:8.9px;line-height:10.68px;color:#e6e6e6;white-space:nowrap;-webkit-text-stroke:0.25px #e6e6e6;transform:scaleX(0.905);transform-origin:0 50%;">Object Mode</div>
<svg style="position:absolute;left:96.5px;top:31.699999999999996px" width="6.2" height="4.2" viewBox="-3.1 -2.1 6.2 4.2"><path d="M-2.1 -1.1 L0 1.1 L2.1 -1.1" fill="none" stroke="#d8d8d8" stroke-width="1.15" stroke-linecap="round" stroke-linejoin="round"/></svg>
<div style="position:absolute;left:114px;top:28.06px;font-size:8.9px;line-height:10.68px;color:#e6e6e6;white-space:nowrap;-webkit-text-stroke:0.25px #e6e6e6;transform:scaleX(0.905);transform-origin:0 50%;">View</div>
<div style="position:absolute;left:141.2px;top:28.06px;font-size:8.9px;line-height:10.68px;color:#e6e6e6;white-space:nowrap;-webkit-text-stroke:0.25px #e6e6e6;transform:scaleX(0.905);transform-origin:0 50%;">Select</div>
<div style="position:absolute;left:174px;top:28.06px;font-size:8.9px;line-height:10.68px;color:#e6e6e6;white-space:nowrap;-webkit-text-stroke:0.25px #e6e6e6;transform:scaleX(0.905);transform-origin:0 50%;">Add</div>
<div style="position:absolute;left:198px;top:28.06px;font-size:8.9px;line-height:10.68px;color:#e6e6e6;white-space:nowrap;-webkit-text-stroke:0.25px #e6e6e6;transform:scaleX(0.905);transform-origin:0 50%;">Object</div>
<div style="position:absolute;left:407.5px;top:27px;width:51px;height:13.5px;background:#282828;border-radius:3px;"></div>
<svg style="position:absolute;left:409.5px;top:28.3px;" width="11" height="11" viewBox="0 0 11 11"><path d="M2 0.8V8.6H10" stroke="#e6e6e6" stroke-width="1.2" fill="none"/><path d="M2 8.6L6 5" stroke="#e6e6e6" stroke-width="1.1"/><circle cx="2" cy="1.2" r="1.2" fill="#e6e6e6"/><circle cx="9.6" cy="8.6" r="1.2" fill="#e6e6e6"/><circle cx="6.3" cy="4.8" r="1.2" fill="#e6e6e6"/></svg>
<div style="position:absolute;left:424px;top:28.06px;font-size:8.9px;line-height:10.68px;color:#e6e6e6;white-space:nowrap;-webkit-text-stroke:0.25px #e6e6e6;transform:scaleX(0.905);transform-origin:0 50%;">Global</div>
<svg style="position:absolute;left:451.4px;top:31.699999999999996px" width="6.2" height="4.2" viewBox="-3.1 -2.1 6.2 4.2"><path d="M-2.1 -1.1 L0 1.1 L2.1 -1.1" fill="none" stroke="#d8d8d8" stroke-width="1.15" stroke-linecap="round" stroke-linejoin="round"/></svg>
<div style="position:absolute;left:463px;top:27px;width:22.5px;height:13.5px;background:#282828;border-radius:3px;"></div>
<svg style="position:absolute;left:465.5px;top:28.3px;" width="12" height="11" viewBox="0 0 12 11"><ellipse cx="4" cy="6.8" rx="3.1" ry="2.6" transform="rotate(-35 4 6.8)" fill="none" stroke="#e6e6e6" stroke-width="1.3"/><ellipse cx="8" cy="4" rx="3.1" ry="2.6" transform="rotate(-35 8 4)" fill="none" stroke="#e6e6e6" stroke-width="1.3"/></svg>
<svg style="position:absolute;left:477.9px;top:31.699999999999996px" width="6.2" height="4.2" viewBox="-3.1 -2.1 6.2 4.2"><path d="M-2.1 -1.1 L0 1.1 L2.1 -1.1" fill="none" stroke="#d8d8d8" stroke-width="1.15" stroke-linecap="round" stroke-linejoin="round"/></svg>
<div style="position:absolute;left:489px;top:27px;width:13.5px;height:13.5px;background:#545454;border-radius:0px;border-radius:3px 0 0 3px"></div>
<svg style="position:absolute;left:490.5px;top:28.5px;" width="11" height="11" viewBox="0 0 11 11"><path d="M2.2 8.5A3.6 3.6 0 0 1 2.2 3.2L5 0.8M5.2 8.7A1.3 1.3 0 0 1 5.2 6.2L8.2 3.5" stroke="#8c8c8c" stroke-width="1.6" fill="none" transform="rotate(8 5 5)"/></svg>
<div style="position:absolute;left:503px;top:27px;width:21.5px;height:13.5px;background:#282828;border-radius:0px;border-radius:0 3px 3px 0"></div>
<svg style="position:absolute;left:504.5px;top:28.5px;" width="11" height="11" viewBox="0 0 11 11"><path d="M0.8 5.5V10M0.8 7.8H9.6M9.6 5.5V10M5.2 6V9.6" stroke="#e6e6e6" stroke-width="1.1" fill="none"/><rect x="6.2" y="0.6" width="3.6" height="3.6" fill="#e6e6e6"/></svg>
<svg style="position:absolute;left:517.4px;top:31.699999999999996px" width="6.2" height="4.2" viewBox="-3.1 -2.1 6.2 4.2"><path d="M-2.1 -1.1 L0 1.1 L2.1 -1.1" fill="none" stroke="#d8d8d8" stroke-width="1.15" stroke-linecap="round" stroke-linejoin="round"/></svg>
<div style="position:absolute;left:529px;top:27px;width:13.5px;height:13.5px;background:#545454;border-radius:0px;border-radius:3px 0 0 3px"></div>
<svg style="position:absolute;left:530.5px;top:28.5px;" width="11" height="11" viewBox="0 0 11 11"><circle cx="5.2" cy="5.2" r="3.7" fill="none" stroke="#767676" stroke-width="1"/><circle cx="5.2" cy="5.2" r="1.7" fill="#ececec"/></svg>
<div style="position:absolute;left:543.5px;top:27px;width:21.5px;height:13.5px;background:#2e2e2e;border-radius:0px;border-radius:0 3px 3px 0"></div>
<svg style="position:absolute;left:546px;top:29px;" width="10" height="10" viewBox="0 0 10 10"><path d="M0.8 8.6C3 8.6 3.4 1.4 5 1.4C6.6 1.4 7 8.6 9.2 8.6" stroke="#454545" stroke-width="1.1" fill="none"/></svg>
<svg style="position:absolute;left:557.9px;top:31.699999999999996px" width="6.2" height="4.2" viewBox="-3.1 -2.1 6.2 4.2"><path d="M-2.1 -1.1 L0 1.1 L2.1 -1.1" fill="none" stroke="#454545" stroke-width="1.15" stroke-linecap="round" stroke-linejoin="round"/></svg>
<div style="position:absolute;left:808px;top:26.8px;width:23.5px;height:13.5px;background:#282828;border-radius:3px;"></div>
<svg style="position:absolute;left:809.5px;top:28px;" width="12" height="11.5" viewBox="0 0 12 11.5"><ellipse cx="6.4" cy="3.6" rx="4.8" ry="3" fill="#e6e6e6"/><circle cx="6.4" cy="3.6" r="1.4" fill="#222"/><path d="M0.6 6.4L2.2 10.8L3.6 8.6L6 8.4Z" fill="#e6e6e6"/></svg>
<svg style="position:absolute;left:823.5px;top:31.699999999999996px" width="6.2" height="4.2" viewBox="-3.1 -2.1 6.2 4.2"><path d="M-2.1 -1.1 L0 1.1 L2.1 -1.1" fill="none" stroke="#d8d8d8" stroke-width="1.15" stroke-linecap="round" stroke-linejoin="round"/></svg>
<div style="position:absolute;left:834px;top:26.5px;width:14px;height:13.8px;background:#4a7bc6;border-radius:0px;border-radius:3px 0 0 3px"></div>
<svg style="position:absolute;left:835.5px;top:28px;" width="11" height="11" viewBox="0 0 11 11"><path d="M1 10C1.5 5 5 1.5 10 1M1.2 1.2L9.8 9.8M1 5.6C3.4 5.8 5.2 7.6 5.4 10" stroke="#e8eefa" stroke-width="1.2" fill="none"/></svg>
<div style="position:absolute;left:848.6px;top:26.8px;width:11.5px;height:13.5px;background:#282828;border-radius:0px;border-radius:0 3px 3px 0"></div>
<svg style="position:absolute;left:851.1999999999999px;top:31.699999999999996px" width="6.2" height="4.2" viewBox="-3.1 -2.1 6.2 4.2"><path d="M-2.1 -1.1 L0 1.1 L2.1 -1.1" fill="none" stroke="#d8d8d8" stroke-width="1.15" stroke-linecap="round" stroke-linejoin="round"/></svg>
<div style="position:absolute;left:865.6px;top:26.5px;width:14px;height:13.8px;background:#4a7bc6;border-radius:0px;border-radius:3px 0 0 3px"></div>
<svg style="position:absolute;left:867px;top:28px;" width="11" height="11" viewBox="0 0 11 11"><circle cx="6.4" cy="4.4" r="3.9" fill="#eef2fb"/><circle cx="4" cy="7" r="3.2" fill="none" stroke="#eef2fb" stroke-width="1.2"/></svg>
<div style="position:absolute;left:880.2px;top:26.8px;width:11.8px;height:13.5px;background:#282828;border-radius:0px;border-radius:0 3px 3px 0"></div>
<svg style="position:absolute;left:882.9px;top:31.699999999999996px" width="6.2" height="4.2" viewBox="-3.1 -2.1 6.2 4.2"><path d="M-2.1 -1.1 L0 1.1 L2.1 -1.1" fill="none" stroke="#d8d8d8" stroke-width="1.15" stroke-linecap="round" stroke-linejoin="round"/></svg>
<div style="position:absolute;left:897.6px;top:26.8px;width:13.3px;height:13.5px;background:#454545;border-radius:3px;"></div>
<svg style="position:absolute;left:899.5px;top:28.8px;" width="10" height="10" viewBox="0 0 10 10"><rect x="0.8" y="2.6" width="6" height="6" fill="none" stroke="#565656" stroke-width="1"/><rect x="3" y="0.6" width="6" height="6" fill="none" stroke="#505050" stroke-width="1"/></svg>
<div style="position:absolute;left:915px;top:26.8px;width:13.5px;height:13.5px;background:#585858;border-radius:0px;border-radius:3px 0 0 3px"></div>
<svg style="position:absolute;left:916.4px;top:28.2px;" width="11" height="11" viewBox="0 0 11 11"><circle cx="5.4" cy="5.4" r="4.3" fill="none" stroke="#d8d8d8" stroke-width="1.1"/><path d="M1.1 5.4H9.7M5.4 1.1V9.7" stroke="#d8d8d8" stroke-width="1"/></svg>
<div style="position:absolute;left:928.9px;top:26.8px;width:13.2px;height:13.5px;background:#585858;border-radius:0px;"></div>
<svg style="position:absolute;left:930px;top:28.2px;" width="11" height="11" viewBox="0 0 11 11"><circle cx="5.4" cy="5.4" r="4.5" fill="#d0d0d0"/></svg>
<div style="position:absolute;left:942.5px;top:26.5px;width:13.3px;height:13.8px;background:#4a7bc6;border-radius:0px;"></div>
<svg style="position:absolute;left:943.6px;top:28.2px;" width="11" height="11" viewBox="0 0 11 11"><circle cx="5.4" cy="5.4" r="4.3" fill="none" stroke="#f4f6fb" stroke-width="1.1"/><path d="M5.4 1.1A4.3 4.3 0 1 0 9.7 5.4H5.4Z" fill="#f4f6fb"/></svg>
<div style="position:absolute;left:956.2px;top:26.8px;width:13.2px;height:13.5px;background:#585858;border-radius:0px;border-radius:0 3px 3px 0"></div>
<svg style="position:absolute;left:957.3px;top:28.2px;" width="11" height="11" viewBox="0 0 11 11"><circle cx="5.4" cy="5.4" r="4.3" fill="#8a8a8a" stroke="#c4c4c4" stroke-width="1.1"/><path d="M2.4 6.4A3.2 3.2 0 0 1 6 2.4" stroke="#d8d8d8" stroke-width="1" fill="none"/></svg>
<div style="position:absolute;left:970.3px;top:26.8px;width:11.8px;height:13.5px;background:#282828;border-radius:3px;"></div>
<svg style="position:absolute;left:973.1px;top:31.699999999999996px" width="6.2" height="4.2" viewBox="-3.1 -2.1 6.2 4.2"><path d="M-2.1 -1.1 L0 1.1 L2.1 -1.1" fill="none" stroke="#d8d8d8" stroke-width="1.15" stroke-linecap="round" stroke-linejoin="round"/></svg>
<div style="position:absolute;left:939.6px;top:46px;width:44.6px;height:12px;background:rgba(36,36,36,0.9);border-radius:3px;"></div>
<div style="position:absolute;left:944px;top:46.84px;font-size:8.6px;line-height:10.32px;color:#e6e6e6;white-space:nowrap;-webkit-text-stroke:0.25px #e6e6e6;transform:scaleX(0.905);transform-origin:0 50%;">Options</div>
<svg style="position:absolute;left:975.3px;top:50.199999999999996px" width="6.2" height="4.2" viewBox="-3.1 -2.1 6.2 4.2"><path d="M-2.1 -1.1 L0 1.1 L2.1 -1.1" fill="none" stroke="#d8d8d8" stroke-width="1.15" stroke-linecap="round" stroke-linejoin="round"/></svg>
<div style="position:absolute;left:2px;top:43.5px;width:68px;height:16.5px;background:rgba(58,58,58,0.55);border-radius:3px;"></div>
<div style="position:absolute;left:4px;top:45px;width:12.6px;height:13px;background:#4a7bc6;border-radius:2px;"></div>
<svg style="position:absolute;left:4.6px;top:45.5px;" width="11.5" height="12" viewBox="0 0 11.5 12"><rect x="0.8" y="0.8" width="9.8" height="10.2" fill="none" stroke="#bcd3f5" stroke-width="1.2" stroke-dasharray="1.6 1.1"/></svg>
<svg style="position:absolute;left:18px;top:45.5px;" width="11.5" height="12" viewBox="0 0 11.5 12"><rect x="0.5" y="3.2" width="7" height="7.6" fill="#dcdcdc"/><rect x="4" y="0.6" width="7" height="7.6" fill="#dcdcdc" stroke="#3a3a3a" stroke-width="0.8"/></svg>
<svg style="position:absolute;left:31px;top:45.5px;" width="11.5" height="12" viewBox="0 0 11.5 12"><rect x="0.8" y="3.8" width="6.4" height="7" fill="none" stroke="#cfcfcf" stroke-width="1.1" stroke-dasharray="1.4 1"/><rect x="4.6" y="0.6" width="6.4" height="7" fill="#dcdcdc"/></svg>
<svg style="position:absolute;left:44px;top:45.5px;" width="11.5" height="12" viewBox="0 0 11.5 12"><rect x="0.6" y="3.4" width="7" height="7.4" fill="#dcdcdc"/><rect x="4" y="0.8" width="6.8" height="7.2" fill="#3f3f3f" stroke="#dcdcdc" stroke-width="1.2"/></svg>
<svg style="position:absolute;left:57px;top:45.5px;" width="11.5" height="12" viewBox="0 0 11.5 12"><rect x="0.8" y="0.8" width="9.8" height="10.2" fill="none" stroke="#c4c4c4" stroke-width="1.1" stroke-dasharray="1.4 1.1"/><rect x="3.2" y="3.4" width="5" height="5" fill="#dcdcdc"/></svg>
<div style="position:absolute;left:43px;top:66.44px;font-size:8.6px;line-height:10.32px;color:#f2f2f2;white-space:nowrap;-webkit-text-stroke:0.25px #f2f2f2;transform:scaleX(0.905);transform-origin:0 50%;text-shadow:0 0 2px #000,0 0 1px #000;">User Perspective</div>
<div style="position:absolute;left:43px;top:79.04px;font-size:8.6px;line-height:10.32px;color:#f2f2f2;white-space:nowrap;-webkit-text-stroke:0.25px #f2f2f2;transform:scaleX(0.945);transform-origin:0 50%;text-shadow:0 0 2px #000,0 0 1px #000;">(1) Collection | Cube Alt D</div>
<div style="position:absolute;left:3.1px;top:66.2px;width:27.5px;height:23.6px;background:#4a7bc6;border-radius:0px;border-radius:3px 3px 0 0"></div>
<div style="position:absolute;left:3.1px;top:89.8px;width:27.5px;height:24.4px;background:rgba(43,43,43,0.96);border-radius:0px;border-radius:0 0 3px 3px"></div>
<div style="position:absolute;left:3.1px;top:118.6px;width:27.5px;height:96px;background:rgba(43,43,43,0.96);border-radius:3px;"></div>
<div style="position:absolute;left:3.1px;top:219.8px;width:27.5px;height:47.4px;background:rgba(43,43,43,0.96);border-radius:3px;"></div>
<div style="position:absolute;left:3.1px;top:271.8px;width:27.5px;height:24.4px;background:rgba(43,43,43,0.96);border-radius:3px;"></div>
<svg style="position:absolute;left:7.5px;top:69.5px;" width="19" height="18" viewBox="0 0 19 18"><rect x="0.9" y="0.9" width="16.6" height="15.6" rx="1" fill="none" stroke="#c6d9f7" stroke-width="1.3" stroke-dasharray="2.3 1.5"/><path d="M6.2 3.8V12.6L8.5 10.6L10 13.6L11.4 13L10 10L12.8 9.8Z" fill="#ffffff"/></svg>
<svg style="position:absolute;left:7px;top:92.7px;" width="19.2" height="19.2" viewBox="0 0 19.2 19.2"><circle cx="9.6" cy="9.6" r="7.6" fill="none" stroke="#f0f0f0" stroke-width="1.5"/><circle cx="9.6" cy="9.6" r="7.6" fill="none" stroke="#d05050" stroke-width="1.5" stroke-dasharray="2.4 3.6"/><path d="M9.6 0.6V6.6M9.6 12.6V18.6M0.6 9.6H6.6M12.6 9.6H18.6" stroke="#f0f0f0" stroke-width="1.3"/></svg>
<svg style="position:absolute;left:7px;top:121.3px;" width="19.2" height="19.2" viewBox="0 0 19.2 19.2"><path d="M9.6 0.4L12.6 4.6H6.6ZM9.6 18.8L12.6 14.6H6.6ZM0.4 9.6L4.6 6.6V12.6ZM18.8 9.6L14.6 6.6V12.6Z" fill="#f0f0f0"/><path d="M9.6 5.2V7.6M9.6 11.6V14M5.2 9.6H7.6M11.6 9.6H14" stroke="#f0f0f0" stroke-width="1.6" stroke-dasharray="1.2 0.8"/></svg>
<svg style="position:absolute;left:7px;top:145.2px;" width="19.2" height="19.2" viewBox="0 0 19.2 19.2"><path d="M3.2 9.2A6.5 6.5 0 0 1 16 9.2M15.6 12.2A6.5 6.5 0 0 1 3.6 12.2" fill="none" stroke="#f0f0f0" stroke-width="1.4"/><path d="M1 8L5.6 8L3.2 11.4ZM18.2 8L13.6 8L16 11.4Z" fill="#f0f0f0"/><path d="M9.6 7.2L12 9.6L9.6 12L7.2 9.6Z" fill="#f0f0f0"/></svg>
<svg style="position:absolute;left:10px;top:172px;" width="14.5" height="14.5" viewBox="0 0 14.5 14.5"><rect x="0.7" y="0.7" width="12.6" height="12.6" fill="none" stroke="#f0f0f0" stroke-width="1.3"/><rect x="0.7" y="7" width="6.4" height="6.4" fill="#f0f0f0"/><path d="M7.6 6.4L11.4 2.6M8.4 2.4H11.6V5.6" stroke="#f0f0f0" stroke-width="1.3" fill="none"/></svg>
<svg style="position:absolute;left:27.3px;top:187.3px;" width="2.2" height="2.2" viewBox="0 0 2.2 2.2"><path d="M2.2 0V2.2H0Z" fill="#9a9a9a"/></svg>
<svg style="position:absolute;left:8.4px;top:193.9px;" width="17.2" height="17.2" viewBox="0 0 17.2 17.2"><circle cx="8.6" cy="8.6" r="7.2" fill="none" stroke="#f0f0f0" stroke-width="1.5"/><rect x="5.4" y="5.4" width="6.4" height="6.4" rx="0.8" fill="#f0f0f0"/><path d="M8.6 0.2L10.4 2.8H6.8ZM8.6 17L10.4 14.4H6.8ZM0.2 8.6L2.8 6.8V10.4ZM17 8.6L14.4 6.8V10.4Z" fill="#f0f0f0" stroke="#262626" stroke-width="0.5"/></svg>
<svg style="position:absolute;left:7.5px;top:223.5px;" width="20" height="18" viewBox="0 0 20 18"><path d="M3.4 12.2L13.6 2.4" stroke="#f0f0f0" stroke-width="3.6" stroke-linecap="round"/><path d="M4.6 11L13.4 2.6" stroke="#2b2b2b" stroke-width="1.2" stroke-linecap="round"/><path d="M2.6 14.2C6.4 16.4 8 11.2 10.8 11.6C13.6 12 12.8 16 17 14.6" stroke="#e8e8e8" stroke-width="1.1" fill="none"/></svg>
<svg style="position:absolute;left:27.3px;top:240.3px;" width="2.2" height="2.2" viewBox="0 0 2.2 2.2"><path d="M2.2 0V2.2H0Z" fill="#9a9a9a"/></svg>
<svg style="position:absolute;left:9.5px;top:247.5px;" width="16" height="18" viewBox="0 0 16 18"><path d="M1.2 0.8H4V14.4H14.8V17.2H1.2Z" fill="#f0f0f0"/><path d="M4.6 14A8.6 8.6 0 0 1 13 5.8L13.4 14Z" fill="#7fd6b4" opacity="0.9"/></svg>
<svg style="position:absolute;left:7px;top:274.5px;" width="20" height="20" viewBox="0 0 20 20"><path d="M3 0.6V5.4M0.6 3H5.4" stroke="#7fd6b4" stroke-width="1.5"/><path d="M5 8.4L8.6 5H17.6V14L14 17.6H5ZM5 8.4H14V17.6M14 8.4L17.6 5" fill="none" stroke="#e6e6e6" stroke-width="1.2" stroke-linejoin="round"/></svg>
<svg style="position:absolute;left:27.3px;top:292.3px;" width="2.2" height="2.2" viewBox="0 0 2.2 2.2"><path d="M2.2 0V2.2H0Z" fill="#9a9a9a"/></svg>
<svg style="position:absolute;left:27.3px;top:86.3px;" width="2.2" height="2.2" viewBox="0 0 2.2 2.2"><path d="M2.2 0V2.2H0Z" fill="#b9cdee"/></svg>
<svg style="position:absolute;left:0px;top:0px;pointer-events:none;" width="1200" height="653" viewBox="0 0 1200 653"><circle cx="933.8" cy="91.4" r="5" fill="#6d3a42" stroke="#8a3c48" stroke-width="0.8" opacity="0.85"/><circle cx="953.3" cy="117.2" r="5" fill="#365a86" stroke="#3f6fa8" stroke-width="0.8" opacity="0.85"/><path d="M953.2 94.2L953.2 77" stroke="#3b8be8" stroke-width="1.4"/><path d="M953.2 94.2L968 97.8" stroke="#f03c55" stroke-width="1.4"/><path d="M953.2 94.2L962 91.6" stroke="#8cb420" stroke-width="1.4"/><circle cx="941" cy="100" r="5.7" fill="#5c7a1c" stroke="#8fb82a" stroke-width="1.2"/><circle cx="965.4" cy="90.5" r="5.5" fill="#86b024"/><circle cx="972.6" cy="98.6" r="5.5" fill="#f03c55"/><circle cx="953.3" cy="73.5" r="5.5" fill="#3b8be8"/><g font-family="Liberation Sans,sans-serif" font-size="7" font-weight="bold" fill="#101010" text-anchor="middle"><text x="953.3" y="76">Z</text><text x="965.4" y="93">Y</text><text x="972.6" y="101.1">X</text></g></svg>
<div style="position:absolute;left:964.6px;top:124.7px;width:17.6px;height:17.6px;background:#333333;border-radius:8.8px;"></div>
<div style="position:absolute;left:964.6px;top:146.2px;width:17.6px;height:17.6px;background:#333333;border-radius:8.8px;"></div>
<div style="position:absolute;left:964.6px;top:167.6px;width:17.6px;height:17.6px;background:#333333;border-radius:8.8px;"></div>
<div style="position:absolute;left:964.6px;top:188.39999999999998px;width:17.6px;height:17.6px;background:#333333;border-radius:8.8px;"></div>
<svg style="position:absolute;left:966.5px;top:127px;" width="14" height="14" viewBox="0 0 14 14"><circle cx="8.2" cy="5.6" r="4" fill="none" stroke="#f0f0f0" stroke-width="1.5"/><path d="M5.4 8.4L1.6 12.2" stroke="#f0f0f0" stroke-width="2" stroke-linecap="round"/><path d="M8.2 3.8V7.4M6.4 5.6H10" stroke="#f0f0f0" stroke-width="1"/></svg>
<svg style="position:absolute;left:966.8px;top:148.5px;" width="14" height="14" viewBox="0 0 14 14"><path d="M3.2 7V3.4a0.9 0.9 0 0 1 1.8 0V2.2a0.9 0.9 0 0 1 1.8 0V2a0.9 0.9 0 0 1 1.8 0V3a0.9 0.9 0 0 1 1.8 0V8.4C10.4 11 9 12.6 6.8 12.6C5 12.6 4 11.8 3 10L1.2 7.2C0.8 6.2 2 5.6 2.6 6.4Z" fill="#f0f0f0"/></svg>
<svg style="position:absolute;left:966px;top:170px;" width="14" height="14" viewBox="0 0 14 14"><circle cx="4" cy="4" r="2.6" fill="none" stroke="#f0f0f0" stroke-width="1.2"/><circle cx="9.2" cy="3.6" r="2" fill="none" stroke="#f0f0f0" stroke-width="1.2"/><rect x="3" y="7.2" width="6.6" height="4.6" rx="0.8" fill="#f0f0f0"/><path d="M9.8 9.4L12.8 7.6V11.6Z" fill="#f0f0f0"/></svg>
<svg style="position:absolute;left:966px;top:191px;" width="14" height="13" viewBox="0 0 14 13"><path d="M3.6 1.4H10.4L13 11.2H1ZM5.8 1.4L4.8 11.2M8.2 1.4L9.2 11.2M2.8 4.6H11.2M2 7.8H12" fill="none" stroke="#f0f0f0" stroke-width="1.1" stroke-linejoin="round"/></svg>
<svg style="position:absolute;left:983.5px;top:78.5px;" width="4" height="7" viewBox="0 0 4 7"><path d="M3.2 0.8L0.8 3.5L3.2 6.2" stroke="#b0b0b0" stroke-width="1" fill="none"/></svg>
<div style="position:absolute;left:930.2px;top:546.2px;width:44.8px;height:55.3px;background:#000000;border-radius:2.5px;"></div>
<svg style="position:absolute;left:930px;top:546px;" width="45.5" height="56" viewBox="0 0 45.5 56"><path d="M4.6 34V13.6Q4.6 4.6 13.6 4.6H32.2Q41.2 4.6 41.2 13.6V34A18.3 17.7 0 0 1 4.6 34Z M4.6 27.9H41.2M16.8 4.6V27.9M28.4 4.6V27.9" fill="none" stroke="#eaeaea" stroke-width="1.4"/></svg>
<div style="position:absolute;left:1197px;top:24px;width:3px;height:629px;background:#3c3c3c;border-radius:0px;"></div>
<div style="position:absolute;left:991.5px;top:24px;width:204px;height:251.3px;background:#2a2a2a;border-radius:4px;"></div>
<div style="position:absolute;left:991.5px;top:24px;width:204px;height:18.5px;background:#303030;border-radius:0px;border-radius:4px 4px 0 0"></div>
<div style="position:absolute;left:991.5px;top:57.6px;width:204px;height:14.07px;background:#2d2d2d;border-radius:0px;"></div>
<div style="position:absolute;left:991.5px;top:85.74000000000001px;width:204px;height:14.07px;background:#2d2d2d;border-radius:0px;"></div>
<div style="position:absolute;left:991.5px;top:113.88px;width:204px;height:14.07px;background:#2d2d2d;border-radius:0px;"></div>
<div style="position:absolute;left:991.5px;top:142.02px;width:204px;height:14.07px;background:#2d2d2d;border-radius:0px;"></div>
<div style="position:absolute;left:991.5px;top:170.16px;width:204px;height:14.07px;background:#2d2d2d;border-radius:0px;"></div>
<div style="position:absolute;left:991.5px;top:198.29999999999998px;width:204px;height:14.07px;background:#2d2d2d;border-radius:0px;"></div>
<div style="position:absolute;left:991.5px;top:226.44px;width:204px;height:14.07px;background:#2d2d2d;border-radius:0px;"></div>
<div style="position:absolute;left:991.5px;top:254.58px;width:204px;height:14.07px;background:#2d2d2d;border-radius:0px;"></div>
<div style="position:absolute;left:991.5px;top:282.72px;width:204px;height:-7.420000000000016px;background:#2d2d2d;border-radius:0px;border-radius:0 0 4px 4px"></div>
<svg style="position:absolute;left:1000px;top:28px;" width="11" height="11" viewBox="0 0 11 11"><rect x="0.5" y="0.6" width="3.4" height="2.6" fill="#e0e0e0"/><rect x="3.4" y="4.2" width="3.2" height="2.4" fill="#e0e0e0"/><rect x="3.4" y="7.8" width="3.2" height="2.4" fill="#e0e0e0"/><path d="M1.6 3V9H3.6M1.6 5.4H3.6M5 1.9H10.6M7.6 5.4H10.6M7.6 9H10.6" stroke="#e0e0e0" stroke-width="1" fill="none"/></svg>
<svg style="position:absolute;left:1011.6px;top:31.5px" width="6.2" height="4.2" viewBox="-3.1 -2.1 6.2 4.2"><path d="M-2.1 -1.1 L0 1.1 L2.1 -1.1" fill="none" stroke="#d8d8d8" stroke-width="1.15" stroke-linecap="round" stroke-linejoin="round"/></svg>
<svg style="position:absolute;left:1026px;top:28px;" width="11.5" height="11" viewBox="0 0 11.5 11"><rect x="0.8" y="0.8" width="7" height="7" rx="1" fill="#8a8a8a"/><rect x="3" y="3" width="7.6" height="7.2" rx="1" fill="#e6e6e6"/><path d="M4 8.8L6.2 5.8L7.5 7.4L8.2 6.7L9.6 8.8Z" fill="#333"/></svg>
<svg style="position:absolute;left:1038.4px;top:31.5px" width="6.2" height="4.2" viewBox="-3.1 -2.1 6.2 4.2"><path d="M-2.1 -1.1 L0 1.1 L2.1 -1.1" fill="none" stroke="#d8d8d8" stroke-width="1.15" stroke-linecap="round" stroke-linejoin="round"/></svg>
<div style="position:absolute;left:1057px;top:27px;width:79.5px;height:12.6px;background:#1d1d1d;border-radius:3px;"></div>
<svg style="position:absolute;left:1059.5px;top:28px;" width="11" height="11" viewBox="0 0 11 11"><circle cx="6.6" cy="4.2" r="3.2" fill="none" stroke="#e0e0e0" stroke-width="1.3"/><path d="M4.4 6.6L1 10" stroke="#e0e0e0" stroke-width="1.6" stroke-linecap="round"/></svg>
<div style="position:absolute;left:1075px;top:28.24px;font-size:8.6px;line-height:10.32px;color:#6a6a6a;white-space:nowrap;-webkit-text-stroke:0.25px #6a6a6a;transform:scaleX(0.905);transform-origin:0 50%;">Search</div>
<svg style="position:absolute;left:1155px;top:28.3px;" width="11" height="10.5" viewBox="0 0 11 10.5"><path d="M0.8 0.8H10.2L6.6 5V9.6L4.4 8.4V5Z" fill="none" stroke="#e0e0e0" stroke-width="1.2" stroke-linejoin="round"/></svg>
<svg style="position:absolute;left:1167.4px;top:31.699999999999996px" width="6.2" height="4.2" viewBox="-3.1 -2.1 6.2 4.2"><path d="M-2.1 -1.1 L0 1.1 L2.1 -1.1" fill="none" stroke="#d8d8d8" stroke-width="1.15" stroke-linecap="round" stroke-linejoin="round"/></svg>
<div style="position:absolute;left:1179px;top:27px;width:13.6px;height:12.6px;background:#4a4a4a;border-radius:3px;"></div>
<svg style="position:absolute;left:1180.6px;top:28px;" width="11" height="11" viewBox="0 0 11 11"><rect x="0.8" y="3" width="6.6" height="6.6" fill="none" stroke="#9a9a9a" stroke-width="1"/><path d="M2.6 5.2H5.6M2.6 7.2H5.6" stroke="#9a9a9a" stroke-width="0.9"/><path d="M8.4 0.6V5M6.2 2.8H10.6" stroke="#b8b8b8" stroke-width="1.1"/></svg>
<div style="position:absolute;left:991.5px;top:127px;width:204px;height:14px;background:#35558c;border-radius:0px;"></div>
<div style="position:absolute;left:1011.5px;top:70px;width:0.9px;height:154.5px;background:#474747;border-radius:0px;"></div>
<svg style="position:absolute;left:1007.2px;top:44.49999999999999px;" width="10.6" height="10.4" viewBox="0 0 10.6 10.4"><rect x="0.6" y="0" width="9.4" height="3" rx="0.6" fill="#e8e8e8"/><path d="M1.2 3.8H9.4V10.2H1.2Z" fill="#e8e8e8"/><rect x="3.5" y="5" width="3.6" height="1.5" fill="#2a2a2a"/></svg>
<div style="position:absolute;left:1022.4px;top:45.65px;font-size:8.75px;line-height:10.50px;color:#e2e2e2;white-space:nowrap;-webkit-text-stroke:0.25px #e2e2e2;transform:scaleX(0.905);transform-origin:0 50%;">Scene Collection</div>
<svg style="position:absolute;left:1008.8000000000001px;top:62.769999999999996px" width="7.6" height="5" viewBox="-3.8 -2.5 7.6 5"><path d="M-2.8 -1.5 L0 1.5 L2.8 -1.5" fill="none" stroke="#d8d8d8" stroke-width="1.25" stroke-linecap="round" stroke-linejoin="round"/></svg>
<div style="position:absolute;left:1019.5px;top:58.17px;width:13.6px;height:13.4px;background:#4c4c4c;border-radius:3px;"></div>
<svg style="position:absolute;left:1021px;top:59.56999999999999px;" width="10.6" height="10.4" viewBox="0 0 10.6 10.4"><rect x="0.6" y="0" width="9.4" height="3" rx="0.6" fill="#f4f4f4"/><path d="M1.2 3.8H9.4V10.2H1.2Z" fill="#f4f4f4"/><rect x="3.5" y="5" width="3.6" height="1.5" fill="#2a2a2a"/></svg>
<div style="position:absolute;left:1036.2px;top:59.72px;font-size:8.75px;line-height:10.50px;color:#ffffff;white-space:nowrap;-webkit-text-stroke:0.25px #ffffff;transform:scaleX(0.905);transform-origin:0 50%;">Collection</div>
<svg style="position:absolute;left:1151.8px;top:59.7px;" width="8.8" height="8.8" viewBox="0 0 8.8 8.8"><rect x="0" y="0" width="8.8" height="8.8" rx="1" fill="#f0f0f0"/><path d="M2 4.4L3.8 6.2L7 2.4" stroke="#222" stroke-width="1.5" fill="none"/></svg>
<svg style="position:absolute;left:1023.8px;top:75.13999999999999px" width="5" height="7.8" viewBox="-2.5 -3.9 5 7.8"><path d="M-1.5 -2.9 L1.5 0 L-1.5 2.9" fill="none" stroke="#d8d8d8" stroke-width="1.25" stroke-linecap="round" stroke-linejoin="round"/></svg>
<svg style="position:absolute;left:1034.4px;top:73.83999999999999px;" width="11.4" height="10.6" viewBox="0 0 11.4 10.6"><circle cx="3" cy="2.4" r="1.7" fill="none" stroke="#e8963a" stroke-width="1.4"/><circle cx="7.4" cy="2.4" r="1.7" fill="none" stroke="#e8963a" stroke-width="1.4"/><rect x="1" y="5" width="7.6" height="4.8" rx="0.8" fill="#e8963a"/><path d="M8.8 7.4L11.2 5.8V9.6Z" fill="#e8963a"/><rect x="3.4" y="6.4" width="2.6" height="2" fill="#2a2a2a"/></svg>
<div style="position:absolute;left:1050px;top:73.79px;font-size:8.75px;line-height:10.50px;color:#e2e2e2;white-space:nowrap;-webkit-text-stroke:0.25px #e2e2e2;transform:scaleX(0.905);transform-origin:0 50%;">Camera</div>
<div style="position:absolute;left:1091.7px;top:71.8px;width:14px;height:12.8px;background:#2f7867;border-radius:3px;"></div>
<svg style="position:absolute;left:1093.4px;top:73.2px;" width="11" height="10" viewBox="0 0 11 10"><circle cx="3.4" cy="2.6" r="1.6" fill="none" stroke="#3dbb9a" stroke-width="1.2"/><circle cx="7.4" cy="2.6" r="1.6" fill="none" stroke="#3dbb9a" stroke-width="1.2"/><rect x="1.4" y="5" width="7" height="4.2" rx="0.8" fill="none" stroke="#3dbb9a" stroke-width="1.2"/><path d="M8.6 7L10.6 5.6V8.6Z" fill="#3dbb9a"/></svg>
<svg style="position:absolute;left:1023.2px;top:90.91px" width="7.6" height="5" viewBox="-3.8 -2.5 7.6 5"><path d="M-2.8 -1.5 L0 1.5 L2.8 -1.5" fill="none" stroke="#d8d8d8" stroke-width="1.25" stroke-linecap="round" stroke-linejoin="round"/></svg>
<svg style="position:absolute;left:1035.6px;top:87.51px;" width="10.4" height="10" viewBox="0 0 10.4 10"><path d="M1.2 1.2H9.2L5.2 8.8Z" fill="none" stroke="#e8963a" stroke-width="1.7" stroke-linejoin="round"/></svg>
<div style="position:absolute;left:1050px;top:87.86px;font-size:8.75px;line-height:10.50px;color:#e2e2e2;white-space:nowrap;-webkit-text-stroke:0.25px #e2e2e2;transform:scaleX(0.905);transform-origin:0 50%;">Cube</div>
<svg style="position:absolute;left:1036.7px;top:104.98px" width="7.6" height="5" viewBox="-3.8 -2.5 7.6 5"><path d="M-2.8 -1.5 L0 1.5 L2.8 -1.5" fill="none" stroke="#d8d8d8" stroke-width="1.25" stroke-linecap="round" stroke-linejoin="round"/></svg>
<svg style="position:absolute;left:1049px;top:100.98px;" width="11.4" height="10.8" viewBox="0 0 11.4 10.8"><path d="M1.6 1.6H9.8L5.7 9.2Z" fill="none" stroke="#2bb08a" stroke-width="1.3" stroke-linejoin="round"/><circle cx="1.6" cy="1.6" r="1.5" fill="#2bb08a"/><circle cx="9.8" cy="1.6" r="1.5" fill="#2bb08a"/><circle cx="5.7" cy="9.2" r="1.5" fill="#2bb08a"/></svg>
<div style="position:absolute;left:1064.4px;top:101.93px;font-size:8.75px;line-height:10.50px;color:#e2e2e2;white-space:nowrap;-webkit-text-stroke:0.25px #e2e2e2;transform:scaleX(0.905);transform-origin:0 50%;">Cube 01</div>
<svg style="position:absolute;left:1063.7px;top:116.35px;" width="9.8" height="9.8" viewBox="0 0 9.8 9.8"><circle cx="4.9" cy="4.9" r="4.8" fill="#e0708a"/><path d="M4.9 4.9L1.4 2.4A4.4 4.4 0 0 0 3 8.8Z" fill="#7a3044"/><circle cx="5.6" cy="4.4" r="1.4" fill="#4a1c2a"/><circle cx="6.4" cy="7" r="0.9" fill="#7a3044"/></svg>
<div style="position:absolute;left:1078.3px;top:116.00px;font-size:8.75px;line-height:10.50px;color:#e2e2e2;white-space:nowrap;-webkit-text-stroke:0.25px #e2e2e2;transform:scaleX(0.905);transform-origin:0 50%;">Green</div>
<svg style="position:absolute;left:1023.2px;top:133.12px" width="7.6" height="5" viewBox="-3.8 -2.5 7.6 5"><path d="M-2.8 -1.5 L0 1.5 L2.8 -1.5" fill="none" stroke="#c8d4ea" stroke-width="1.25" stroke-linecap="round" stroke-linejoin="round"/></svg>
<div style="position:absolute;left:1033.4px;top:128.3px;width:14px;height:12px;background:#8492ad;border-radius:3px;"></div>
<svg style="position:absolute;left:1035.4px;top:129.92px;" width="10.4" height="10" viewBox="0 0 10.4 10"><path d="M1.2 1.2H9.2L5.2 8.8Z" fill="none" stroke="#ffd7a8" stroke-width="1.7" stroke-linejoin="round"/></svg>
<div style="position:absolute;left:1050px;top:130.07px;font-size:8.75px;line-height:10.50px;color:#f0b24e;white-space:nowrap;-webkit-text-stroke:0.25px #f0b24e;transform:scaleX(0.905);transform-origin:0 50%;">Cube Alt D</div>
<svg style="position:absolute;left:1036.7px;top:147.19000000000003px" width="7.6" height="5" viewBox="-3.8 -2.5 7.6 5"><path d="M-2.8 -1.5 L0 1.5 L2.8 -1.5" fill="none" stroke="#d8d8d8" stroke-width="1.25" stroke-linecap="round" stroke-linejoin="round"/></svg>
<svg style="position:absolute;left:1049px;top:143.19px;" width="11.4" height="10.8" viewBox="0 0 11.4 10.8"><path d="M1.6 1.6H9.8L5.7 9.2Z" fill="none" stroke="#2bb08a" stroke-width="1.3" stroke-linejoin="round"/><circle cx="1.6" cy="1.6" r="1.5" fill="#2bb08a"/><circle cx="9.8" cy="1.6" r="1.5" fill="#2bb08a"/><circle cx="5.7" cy="9.2" r="1.5" fill="#2bb08a"/></svg>
<div style="position:absolute;left:1064.4px;top:144.14px;font-size:8.75px;line-height:10.50px;color:#e2e2e2;white-space:nowrap;-webkit-text-stroke:0.25px #e2e2e2;transform:scaleX(0.905);transform-origin:0 50%;">Cube 01</div>
<div style="position:absolute;left:1061.6px;top:156.3px;width:14px;height:13px;background:#5b4a50;border-radius:3px;"></div>
<svg style="position:absolute;left:1063.7px;top:158.56px;" width="9.8" height="9.8" viewBox="0 0 9.8 9.8"><circle cx="4.9" cy="4.9" r="4.8" fill="#e0708a"/><path d="M4.9 4.9L1.4 2.4A4.4 4.4 0 0 0 3 8.8Z" fill="#7a3044"/><circle cx="5.6" cy="4.4" r="1.4" fill="#4a1c2a"/><circle cx="6.4" cy="7" r="0.9" fill="#7a3044"/></svg>
<div style="position:absolute;left:1078.3px;top:158.21px;font-size:8.75px;line-height:10.50px;color:#e2e2e2;white-space:nowrap;-webkit-text-stroke:0.25px #e2e2e2;transform:scaleX(0.905);transform-origin:0 50%;">Green</div>
<svg style="position:absolute;left:1023.2px;top:175.33px" width="7.6" height="5" viewBox="-3.8 -2.5 7.6 5"><path d="M-2.8 -1.5 L0 1.5 L2.8 -1.5" fill="none" stroke="#d8d8d8" stroke-width="1.25" stroke-linecap="round" stroke-linejoin="round"/></svg>
<svg style="position:absolute;left:1035.6px;top:171.93px;" width="10.4" height="10" viewBox="0 0 10.4 10"><path d="M1.2 1.2H9.2L5.2 8.8Z" fill="none" stroke="#e8963a" stroke-width="1.7" stroke-linejoin="round"/></svg>
<div style="position:absolute;left:1050px;top:172.28px;font-size:8.75px;line-height:10.50px;color:#e2e2e2;white-space:nowrap;-webkit-text-stroke:0.25px #e2e2e2;transform:scaleX(0.905);transform-origin:0 50%;">Cube Shift D</div>
<svg style="position:absolute;left:1036.7px;top:189.4px" width="7.6" height="5" viewBox="-3.8 -2.5 7.6 5"><path d="M-2.8 -1.5 L0 1.5 L2.8 -1.5" fill="none" stroke="#d8d8d8" stroke-width="1.25" stroke-linecap="round" stroke-linejoin="round"/></svg>
<svg style="position:absolute;left:1049px;top:185.39999999999998px;" width="11.4" height="10.8" viewBox="0 0 11.4 10.8"><path d="M1.6 1.6H9.8L5.7 9.2Z" fill="none" stroke="#2bb08a" stroke-width="1.3" stroke-linejoin="round"/><circle cx="1.6" cy="1.6" r="1.5" fill="#2bb08a"/><circle cx="9.8" cy="1.6" r="1.5" fill="#2bb08a"/><circle cx="5.7" cy="9.2" r="1.5" fill="#2bb08a"/></svg>
<div style="position:absolute;left:1064.4px;top:186.35px;font-size:8.75px;line-height:10.50px;color:#e2e2e2;white-space:nowrap;-webkit-text-stroke:0.25px #e2e2e2;transform:scaleX(0.905);transform-origin:0 50%;">Cube 02</div>
<svg style="position:absolute;left:1063.7px;top:200.77px;" width="9.8" height="9.8" viewBox="0 0 9.8 9.8"><circle cx="4.9" cy="4.9" r="4.8" fill="#e0708a"/><path d="M4.9 4.9L1.4 2.4A4.4 4.4 0 0 0 3 8.8Z" fill="#7a3044"/><circle cx="5.6" cy="4.4" r="1.4" fill="#4a1c2a"/><circle cx="6.4" cy="7" r="0.9" fill="#7a3044"/></svg>
<div style="position:absolute;left:1078.3px;top:200.42px;font-size:8.75px;line-height:10.50px;color:#e2e2e2;white-space:nowrap;-webkit-text-stroke:0.25px #e2e2e2;transform:scaleX(0.905);transform-origin:0 50%;">Red</div>
<svg style="position:absolute;left:1023.8px;top:215.84px" width="5" height="7.8" viewBox="-2.5 -3.9 5 7.8"><path d="M-1.5 -2.9 L1.5 0 L-1.5 2.9" fill="none" stroke="#d8d8d8" stroke-width="1.25" stroke-linecap="round" stroke-linejoin="round"/></svg>
<svg style="position:absolute;left:1035.4px;top:213.74px;" width="10" height="11.4" viewBox="0 0 10 11.4"><circle cx="5" cy="4.4" r="4" fill="#e8963a"/><rect x="3.2" y="8" width="3.6" height="3" rx="0.6" fill="#e8963a"/><circle cx="5" cy="4.4" r="1.6" fill="#2a2a2a" opacity="0.55"/></svg>
<div style="position:absolute;left:1050px;top:214.49px;font-size:8.75px;line-height:10.50px;color:#e2e2e2;white-space:nowrap;-webkit-text-stroke:0.25px #e2e2e2;transform:scaleX(0.905);transform-origin:0 50%;">Light</div>
<svg style="position:absolute;left:1083.6px;top:213.34px;" width="11" height="12" viewBox="0 0 11 12"><circle cx="5.4" cy="5" r="4.2" fill="none" stroke="#2bb08a" stroke-width="1.3"/><path d="M5.4 4V11.6" stroke="#2bb08a" stroke-width="1.6"/><circle cx="5.4" cy="4.6" r="1.2" fill="#2bb08a"/></svg>
<svg style="position:absolute;left:1164.6px;top:60.96999999999999px;" width="10.8" height="7.2" viewBox="0 0 10.8 7.2"><path d="M0.6 3.6C2.4 0.4 8.4 0.4 10.2 3.6C8.4 6.8 2.4 6.8 0.6 3.6Z" fill="none" stroke="#eaeaea" stroke-width="1.2"/><circle cx="5.4" cy="3.6" r="1.7" fill="#eaeaea"/></svg>
<svg style="position:absolute;left:1178.8px;top:59.669999999999995px;" width="10.6" height="9.4" viewBox="0 0 10.6 9.4"><path d="M0.4 2.2H2.6L3.6 0.6H7L8 2.2H10.2V9H0.4Z" fill="#eaeaea"/><circle cx="5.3" cy="5.4" r="2" fill="#5a5a5a"/><circle cx="5.3" cy="5.4" r="0.9" fill="#2a2a2a"/></svg>
<svg style="position:absolute;left:1164.6px;top:75.03999999999999px;" width="10.8" height="7.2" viewBox="0 0 10.8 7.2"><path d="M0.6 3.6C2.4 0.4 8.4 0.4 10.2 3.6C8.4 6.8 2.4 6.8 0.6 3.6Z" fill="none" stroke="#eaeaea" stroke-width="1.2"/><circle cx="5.4" cy="3.6" r="1.7" fill="#eaeaea"/></svg>
<svg style="position:absolute;left:1178.8px;top:73.73999999999998px;" width="10.6" height="9.4" viewBox="0 0 10.6 9.4"><path d="M0.4 2.2H2.6L3.6 0.6H7L8 2.2H10.2V9H0.4Z" fill="#eaeaea"/><circle cx="5.3" cy="5.4" r="2" fill="#5a5a5a"/><circle cx="5.3" cy="5.4" r="0.9" fill="#2a2a2a"/></svg>
<svg style="position:absolute;left:1164.6px;top:89.11px;" width="10.8" height="7.2" viewBox="0 0 10.8 7.2"><path d="M0.6 3.6C2.4 0.4 8.4 0.4 10.2 3.6C8.4 6.8 2.4 6.8 0.6 3.6Z" fill="none" stroke="#eaeaea" stroke-width="1.2"/><circle cx="5.4" cy="3.6" r="1.7" fill="#eaeaea"/></svg>
<svg style="position:absolute;left:1178.8px;top:87.80999999999999px;" width="10.6" height="9.4" viewBox="0 0 10.6 9.4"><path d="M0.4 2.2H2.6L3.6 0.6H7L8 2.2H10.2V9H0.4Z" fill="#eaeaea"/><circle cx="5.3" cy="5.4" r="2" fill="#5a5a5a"/><circle cx="5.3" cy="5.4" r="0.9" fill="#2a2a2a"/></svg>
<svg style="position:absolute;left:1164.6px;top:131.32px;" width="10.8" height="7.2" viewBox="0 0 10.8 7.2"><path d="M0.6 3.6C2.4 0.4 8.4 0.4 10.2 3.6C8.4 6.8 2.4 6.8 0.6 3.6Z" fill="none" stroke="#eaeaea" stroke-width="1.2"/><circle cx="5.4" cy="3.6" r="1.7" fill="#eaeaea"/></svg>
<svg style="position:absolute;left:1178.8px;top:130.01999999999998px;" width="10.6" height="9.4" viewBox="0 0 10.6 9.4"><path d="M0.4 2.2H2.6L3.6 0.6H7L8 2.2H10.2V9H0.4Z" fill="#eaeaea"/><circle cx="5.3" cy="5.4" r="2" fill="#5a5a5a"/><circle cx="5.3" cy="5.4" r="0.9" fill="#2a2a2a"/></svg>
<svg style="position:absolute;left:1164.6px;top:173.53px;" width="10.8" height="7.2" viewBox="0 0 10.8 7.2"><path d="M0.6 3.6C2.4 0.4 8.4 0.4 10.2 3.6C8.4 6.8 2.4 6.8 0.6 3.6Z" fill="none" stroke="#eaeaea" stroke-width="1.2"/><circle cx="5.4" cy="3.6" r="1.7" fill="#eaeaea"/></svg>
<svg style="position:absolute;left:1178.8px;top:172.23px;" width="10.6" height="9.4" viewBox="0 0 10.6 9.4"><path d="M0.4 2.2H2.6L3.6 0.6H7L8 2.2H10.2V9H0.4Z" fill="#eaeaea"/><circle cx="5.3" cy="5.4" r="2" fill="#5a5a5a"/><circle cx="5.3" cy="5.4" r="0.9" fill="#2a2a2a"/></svg>
<svg style="position:absolute;left:1164.6px;top:215.74px;" width="10.8" height="7.2" viewBox="0 0 10.8 7.2"><path d="M0.6 3.6C2.4 0.4 8.4 0.4 10.2 3.6C8.4 6.8 2.4 6.8 0.6 3.6Z" fill="none" stroke="#eaeaea" stroke-width="1.2"/><circle cx="5.4" cy="3.6" r="1.7" fill="#eaeaea"/></svg>
<svg style="position:absolute;left:1178.8px;top:214.44px;" width="10.6" height="9.4" viewBox="0 0 10.6 9.4"><path d="M0.4 2.2H2.6L3.6 0.6H7L8 2.2H10.2V9H0.4Z" fill="#eaeaea"/><circle cx="5.3" cy="5.4" r="2" fill="#5a5a5a"/><circle cx="5.3" cy="5.4" r="0.9" fill="#2a2a2a"/></svg>
<div style="position:absolute;left:991.5px;top:279.5px;width:204px;height:380px;background:#343434;border-radius:4px;"></div>
<div style="position:absolute;left:991.5px;top:297.5px;width:20.2px;height:360px;background:#222222;border-radius:0px;"></div>
<svg style="position:absolute;left:999.5px;top:281.5px;" width="12" height="12" viewBox="0 0 12 12"><rect x="0.6" y="1" width="10.4" height="4.2" rx="2.1" fill="none" stroke="#e6e6e6" stroke-width="1.2"/><circle cx="8.6" cy="3.1" r="1.3" fill="#e6e6e6"/><rect x="0.6" y="6.6" width="10.4" height="4.2" rx="2.1" fill="#e6e6e6"/><circle cx="3" cy="8.7" r="1.2" fill="#303030"/></svg>
<svg style="position:absolute;left:1012.1999999999999px;top:286.09999999999997px" width="6.2" height="4.2" viewBox="-3.1 -2.1 6.2 4.2"><path d="M-2.1 -1.1 L0 1.1 L2.1 -1.1" fill="none" stroke="#d8d8d8" stroke-width="1.15" stroke-linecap="round" stroke-linejoin="round"/></svg>
<div style="position:absolute;left:1054.8px;top:282px;width:77.6px;height:11.4px;background:#1d1d1d;border-radius:3px;"></div>
<svg style="position:absolute;left:1056.8px;top:282.3px;" width="11" height="11" viewBox="0 0 11 11"><circle cx="6.6" cy="4.2" r="3.2" fill="none" stroke="#e0e0e0" stroke-width="1.3"/><path d="M4.4 6.6L1 10" stroke="#e0e0e0" stroke-width="1.6" stroke-linecap="round"/></svg>
<div style="position:absolute;left:1072px;top:282.76px;font-size:8.4px;line-height:10.08px;color:#6a6a6a;white-space:nowrap;-webkit-text-stroke:0.25px #6a6a6a;transform:scaleX(0.905);transform-origin:0 50%;">Search</div>
<div style="position:absolute;left:1180.5px;top:282.6px;width:11.6px;height:10.6px;background:#1f1f1f;border-radius:3px;"></div>
<svg style="position:absolute;left:1183.2px;top:286.09999999999997px" width="6.2" height="4.2" viewBox="-3.1 -2.1 6.2 4.2"><path d="M-2.1 -1.1 L0 1.1 L2.1 -1.1" fill="none" stroke="#d8d8d8" stroke-width="1.15" stroke-linecap="round" stroke-linejoin="round"/></svg>
<div style="position:absolute;left:991.5px;top:477.3px;width:20.2px;height:19.6px;background:#2e2e2e;border-radius:0px;border-radius:3px 0 0 3px"></div>
<svg style="position:absolute;left:996.0px;top:306.2px;" width="12" height="12" viewBox="0 0 12 12"><path d="M2.6 0.8V4.4M2.6 7V11.2" stroke="#f0f0f0" stroke-width="1.5"/><circle cx="2.6" cy="5.6" r="1.5" fill="#f0f0f0"/><path d="M6.6 0.8V3.6A1.8 1.8 0 0 0 10.2 3.6V0.8M8.4 5V11.2" stroke="#f0f0f0" stroke-width="1.4" fill="none"/></svg>
<svg style="position:absolute;left:996.0px;top:331.5px;" width="12" height="12" viewBox="0 0 12 12"><path d="M0.8 3.6H8.8V10.8H0.8ZM2.6 3.6V1.6H7.2V3.6M8.8 5.8L11.2 4.6V9.8L8.8 8.6" fill="none" stroke="#e0e0e0" stroke-width="1.3" stroke-linejoin="round"/></svg>
<svg style="position:absolute;left:996.0px;top:351.3px;" width="12" height="12" viewBox="0 0 12 12"><rect x="1" y="0.8" width="10" height="4.2" fill="#e0e0e0"/><path d="M2.6 6.2H9.4V11H2.6Z" fill="none" stroke="#e0e0e0" stroke-width="1.2"/><path d="M4.4 9.6L5.6 8L6.6 9L7.6 9.6Z" fill="#e0e0e0"/></svg>
<svg style="position:absolute;left:996.0px;top:371.1px;" width="12" height="12" viewBox="0 0 12 12"><rect x="0.8" y="0.8" width="7" height="7" rx="1" fill="#8a8a8a"/><rect x="3.4" y="3.4" width="7.8" height="7.8" rx="1" fill="#e6e6e6"/><path d="M4.4 9.8L6.6 6.6L8 8.4L8.8 7.6L10.2 9.8Z" fill="#333"/></svg>
<svg style="position:absolute;left:996.0px;top:390.9px;" width="12" height="12" viewBox="0 0 12 12"><path d="M3.4 0.8L0.8 8.6H6Z" fill="#e0e0e0"/><circle cx="7" cy="3.6" r="2.2" fill="#e0e0e0"/><circle cx="7.8" cy="8.6" r="2.4" fill="none" stroke="#e0e0e0" stroke-width="1.2"/></svg>
<svg style="position:absolute;left:996.0px;top:410.7px;" width="12" height="12" viewBox="0 0 12 12"><circle cx="6" cy="6" r="5" fill="#b9566f"/><path d="M3 3.4C4.4 2.6 5.6 3.6 5 4.8C4.4 6 2.8 5.6 2.4 4.6ZM6.4 5.6C7.8 4.6 9.6 5.4 9.4 7C9.2 8.6 7.6 9.6 6.6 8.6C5.8 7.8 5.6 6.4 6.4 5.6ZM3.2 7.4C4 7.2 4.6 8 4.2 8.8C3.6 9 3 8.2 3.2 7.4Z" fill="#4a1c2a"/></svg>
<svg style="position:absolute;left:996.0px;top:436.0px;" width="12" height="12" viewBox="0 0 12 12"><rect x="0.8" y="0.8" width="10.4" height="3" fill="#f0f0f0"/><path d="M1.6 4.8H10.4V11H1.6Z" fill="none" stroke="#f0f0f0" stroke-width="1.3"/><path d="M4.4 6.8H7.6" stroke="#f0f0f0" stroke-width="1.2"/></svg>
<svg style="position:absolute;left:996.0px;top:461.3px;" width="12" height="12" viewBox="0 0 12 12"><path d="M1.2 3V1.2H3M9 1.2H10.8V3M10.8 9V10.8H9M3 10.8H1.2V9" stroke="#b8762e" stroke-width="1" fill="none"/><rect x="2.6" y="2.6" width="6.8" height="6.8" rx="1" fill="#eba258"/></svg>
<svg style="position:absolute;left:996.0px;top:481.1px;" width="12" height="12" viewBox="0 0 12 12"><path d="M2.4 7.6L7 3L9 5L4.4 9.6Z" fill="#5b8def"/><path d="M7.8 2.2A2.2 2.2 0 0 1 10.6 4.6" stroke="#5b8def" stroke-width="1.2" fill="none"/></svg>
<svg style="position:absolute;left:996.0px;top:500.9px;" width="12" height="12" viewBox="0 0 12 12"><path d="M2 10L4.4 6.4M5 5.6L7 2.4M7.6 2.4L10 6" stroke="#3d62b8" stroke-width="1.1" fill="none"/><circle cx="2" cy="10" r="1.1" fill="#3d62b8"/><circle cx="4.8" cy="6" r="1.1" fill="#3d62b8"/><circle cx="7.4" cy="2.2" r="1.1" fill="#3d62b8"/><circle cx="10" cy="6.4" r="1.1" fill="#3d62b8"/></svg>
<svg style="position:absolute;left:996.0px;top:520.7px;" width="12" height="12" viewBox="0 0 12 12"><circle cx="6" cy="6.2" r="4.3" fill="#1d2740" stroke="#6a8fdc" stroke-width="2"/><circle cx="6" cy="6.2" r="1.5" fill="#8fb0f0"/><circle cx="9.8" cy="2.2" r="1.2" fill="#8fb0f0"/></svg>
<svg style="position:absolute;left:996.0px;top:540.5px;" width="12" height="12" viewBox="0 0 12 12"><ellipse cx="6.4" cy="5.6" rx="4.6" ry="3.4" transform="rotate(-28 6.4 5.6)" fill="#1d2740" stroke="#6a8fdc" stroke-width="1.9"/><circle cx="4.8" cy="7" r="2.5" fill="#6a8fdc"/><circle cx="4.8" cy="7" r="1" fill="#1d2740"/></svg>
<svg style="position:absolute;left:996.0px;top:560.3px;" width="12" height="12" viewBox="0 0 12 12"><path d="M2 2H10L6 9.8Z" fill="none" stroke="#2aa880" stroke-width="1.8" stroke-linejoin="round"/><circle cx="2" cy="2" r="1.9" fill="#2aa880"/><circle cx="10" cy="2" r="1.9" fill="#2aa880"/><circle cx="6" cy="9.8" r="1.9" fill="#2aa880"/></svg>
<svg style="position:absolute;left:996.0px;top:580.1px;" width="12" height="12" viewBox="0 0 12 12"><circle cx="6" cy="6" r="5.1" fill="#d4647e"/><path d="M6 6L2.4 3.4A4.4 4.4 0 0 0 4 9.8Z" fill="#7a3044"/><circle cx="6.6" cy="5.4" r="1.5" fill="#4a1c2a"/><circle cx="7.6" cy="8.2" r="1" fill="#7a3044"/></svg>
<svg style="position:absolute;left:1018.7px;top:304px;" width="11" height="11" viewBox="0 0 11 11"><path d="M0.6 3V0.6H3M8 0.6H10.4V3M10.4 8V10.4H8M3 10.4H0.6V8" stroke="#e6e6e6" stroke-width="1.1" fill="none"/><rect x="2.7" y="2.7" width="5.6" height="5.6" rx="0.8" fill="#e6e6e6"/></svg>
<div style="position:absolute;left:1035.6px;top:304.15px;font-size:8.75px;line-height:10.50px;color:#e2e2e2;white-space:nowrap;-webkit-text-stroke:0.25px #e2e2e2;transform:scaleX(0.905);transform-origin:0 50%;">Cube Alt D</div>
<svg style="position:absolute;left:1179.5px;top:303.5px;" width="11" height="11" viewBox="0 0 11 11"><path d="M6.5 1L10 4.5L8.2 5L6.2 7L6 9L2 5L4 4.8L6 2.8ZM4 7L1 10" stroke="#9a9a9a" stroke-width="1" fill="none" stroke-linejoin="round"/></svg>
<div style="position:absolute;left:1017.7px;top:328.4px;width:175.3px;height:12.6px;background:#545454;border-radius:3px;"></div>
<svg style="position:absolute;left:1021.5px;top:330.7px;" width="8" height="8" viewBox="0 0 8 8"><path d="M4 0.6V7.4M0.6 4H7.4" stroke="#dcdcdc" stroke-width="1"/></svg>
<div style="position:absolute;left:1111px;top:329.25px;font-size:8.75px;line-height:10.50px;color:#e2e2e2;white-space:nowrap;-webkit-text-stroke:0.25px #e2e2e2;transform:translateX(-50%) scaleX(0.905);transform-origin:50% 50%;">Add Modifier</div>
<div style="position:absolute;left:1016.4px;top:472.8px;width:82.4px;height:29.4px;background:#1b1b1b;border-radius:3px;box-shadow:0 1px 3px rgba(0,0,0,0.5);"></div>
<div style="position:absolute;left:1024px;top:476.44px;font-size:8.6px;line-height:10.32px;color:#f4f4f4;white-space:nowrap;-webkit-text-stroke:0.25px #f4f4f4;transform:scaleX(0.905);transform-origin:0 50%;">Modifiers</div>
<div style="position:absolute;left:1024px;top:486.04px;font-size:8.6px;line-height:10.32px;color:#c4c4c4;white-space:nowrap;-webkit-text-stroke:0.25px #c4c4c4;transform:scaleX(0.905);transform-origin:0 50%;">Modifier Properties</div>
<svg style="position:absolute;left:997.4px;top:480.4px;" width="22" height="33" viewBox="0 0 22 33"><path d="M1.3 1.3V24.2L6.8 19.1L10.6 28.4L14.6 26.6L10.8 17.8L18 17.6Z" fill="#ffffff" stroke="#101010" stroke-width="1.4" stroke-linejoin="round"/></svg>
<div style="position:absolute;left:-6px;top:629.4px;width:994px;height:25px;background:#2d2d2d;border-radius:0px;border-radius:4px 4px 0 0"></div>
<div style="position:absolute;left:0px;top:648px;width:988px;height:6px;background:#242424;border-radius:0px;"></div>
<div style="position:absolute;left:0;top:648px;width:988px;height:5px;overflow:hidden"><div style="position:absolute;left:67.5px;top:3.4px;font-size:8px;line-height:8px;color:#7a7a7a;transform:translateX(-50%)">10</div><div style="position:absolute;left:104.3px;top:3.4px;font-size:8px;line-height:8px;color:#7a7a7a;transform:translateX(-50%)">20</div><div style="position:absolute;left:141.1px;top:3.4px;font-size:8px;line-height:8px;color:#7a7a7a;transform:translateX(-50%)">30</div><div style="position:absolute;left:177.9px;top:3.4px;font-size:8px;line-height:8px;color:#7a7a7a;transform:translateX(-50%)">40</div><div style="position:absolute;left:214.7px;top:3.4px;font-size:8px;line-height:8px;color:#7a7a7a;transform:translateX(-50%)">50</div><div style="position:absolute;left:251.5px;top:3.4px;font-size:8px;line-height:8px;color:#7a7a7a;transform:translateX(-50%)">60</div><div style="position:absolute;left:288.3px;top:3.4px;font-size:8px;line-height:8px;color:#7a7a7a;transform:translateX(-50%)">70</div><div style="position:absolute;left:325.1px;top:3.4px;font-size:8px;line-height:8px;color:#7a7a7a;transform:translateX(-50%)">80</div><div style="position:absolute;left:361.9px;top:3.4px;font-size:8px;line-height:8px;color:#7a7a7a;transform:translateX(-50%)">90</div><div style="position:absolute;left:398.7px;top:3.4px;font-size:8px;line-height:8px;color:#7a7a7a;transform:translateX(-50%)">100</div><div style="position:absolute;left:435.5px;top:3.4px;font-size:8px;line-height:8px;color:#7a7a7a;transform:translateX(-50%)">110</div><div style="position:absolute;left:472.3px;top:3.4px;font-size:8px;line-height:8px;color:#7a7a7a;transform:translateX(-50%)">120</div><div style="position:absolute;left:509.1px;top:3.4px;font-size:8px;line-height:8px;color:#7a7a7a;transform:translateX(-50%)">130</div><div style="position:absolute;left:545.9px;top:3.4px;font-size:8px;line-height:8px;color:#7a7a7a;transform:translateX(-50%)">140</div><div style="position:absolute;left:582.7px;top:3.4px;font-size:8px;line-height:8px;color:#7a7a7a;transform:translateX(-50%)">150</div><div style="position:absolute;left:619.5px;top:3.4px;font-size:8px;line-height:8px;color:#7a7a7a;transform:translateX(-50%)">160</div><div style="position:absolute;left:656.3px;top:3.4px;font-size:8px;line-height:8px;color:#7a7a7a;transform:translateX(-50%)">170</div><div style="position:absolute;left:693.1px;top:3.4px;font-size:8px;line-height:8px;color:#7a7a7a;transform:translateX(-50%)">180</div><div style="position:absolute;left:729.9px;top:3.4px;font-size:8px;line-height:8px;color:#7a7a7a;transform:translateX(-50%)">190</div><div style="position:absolute;left:766.7px;top:3.4px;font-size:8px;line-height:8px;color:#7a7a7a;transform:translateX(-50%)">200</div><div style="position:absolute;left:803.5px;top:3.4px;font-size:8px;line-height:8px;color:#7a7a7a;transform:translateX(-50%)">210</div><div style="position:absolute;left:840.3px;top:3.4px;font-size:8px;line-height:8px;color:#7a7a7a;transform:translateX(-50%)">220</div><div style="position:absolute;left:877.1px;top:3.4px;font-size:8px;line-height:8px;color:#7a7a7a;transform:translateX(-50%)">230</div><div style="position:absolute;left:913.9px;top:3.4px;font-size:8px;line-height:8px;color:#7a7a7a;transform:translateX(-50%)">240</div><div style="position:absolute;left:950.7px;top:3.4px;font-size:8px;line-height:8px;color:#7a7a7a;transform:translateX(-50%)">250</div></div>
<div style="position:absolute;left:25.5px;top:649.3px;width:17px;height:6px;background:#4a7bc6;border-radius:2px;"></div>
<div style="position:absolute;left:34px;top:649.40px;font-size:8px;line-height:9.60px;color:#ffffff;white-space:nowrap;-webkit-text-stroke:0.25px #ffffff;transform:translateX(-50%) scaleX(0.905);transform-origin:50% 50%;">1</div>
<svg style="position:absolute;left:5.6px;top:633.4px;" width="10.8" height="10.8" viewBox="0 0 10.8 10.8"><circle cx="5.4" cy="5.4" r="5.2" fill="#f0f0f0"/><path d="M5.4 5.4V1.6A3.8 3.8 0 0 1 8.6 7.4Z" fill="#2d2d2d"/></svg>
<svg style="position:absolute;left:17.5px;top:636.9px" width="6.2" height="4.2" viewBox="-3.1 -2.1 6.2 4.2"><path d="M-2.1 -1.1 L0 1.1 L2.1 -1.1" fill="none" stroke="#d8d8d8" stroke-width="1.15" stroke-linecap="round" stroke-linejoin="round"/></svg>
<div style="position:absolute;left:34.2px;top:633.42px;font-size:8.8px;line-height:10.56px;color:#e6e6e6;white-space:nowrap;-webkit-text-stroke:0.25px #e6e6e6;transform:scaleX(0.905);transform-origin:0 50%;">Playback</div>
<svg style="position:absolute;left:69.9px;top:637.1px" width="6.2" height="4.2" viewBox="-3.1 -2.1 6.2 4.2"><path d="M-2.1 -1.1 L0 1.1 L2.1 -1.1" fill="none" stroke="#d8d8d8" stroke-width="1.15" stroke-linecap="round" stroke-linejoin="round"/></svg>
<div style="position:absolute;left:82.8px;top:633.42px;font-size:8.8px;line-height:10.56px;color:#e6e6e6;white-space:nowrap;-webkit-text-stroke:0.25px #e6e6e6;transform:scaleX(0.905);transform-origin:0 50%;">Keying</div>
<svg style="position:absolute;left:111.4px;top:637.1px" width="6.2" height="4.2" viewBox="-3.1 -2.1 6.2 4.2"><path d="M-2.1 -1.1 L0 1.1 L2.1 -1.1" fill="none" stroke="#d8d8d8" stroke-width="1.15" stroke-linecap="round" stroke-linejoin="round"/></svg>
<div style="position:absolute;left:126.2px;top:633.42px;font-size:8.8px;line-height:10.56px;color:#e6e6e6;white-space:nowrap;-webkit-text-stroke:0.25px #e6e6e6;transform:scaleX(0.905);transform-origin:0 50%;">View</div>
<div style="position:absolute;left:153.7px;top:633.42px;font-size:8.8px;line-height:10.56px;color:#e6e6e6;white-space:nowrap;-webkit-text-stroke:0.25px #e6e6e6;transform:scaleX(0.905);transform-origin:0 50%;">Marker</div>
<div style="position:absolute;left:427.5px;top:632px;width:13.8px;height:13.2px;background:#4f4f4f;border-radius:3px;"></div>
<svg style="position:absolute;left:429.4px;top:633.8px;" width="10" height="10" viewBox="0 0 10 10"><circle cx="5" cy="5" r="3.2" fill="none" stroke="#969696" stroke-width="1.4"/></svg>
<svg style="position:absolute;left:444.5px;top:636.9px" width="6" height="4" viewBox="-3.0 -2.0 6 4"><path d="M-2.0 -1.0 L0 1.0 L2.0 -1.0" fill="none" stroke="#4a4a4a" stroke-width="1.15" stroke-linecap="round" stroke-linejoin="round"/></svg>
<div style="position:absolute;left:459.2px;top:632px;width:83.4px;height:13.2px;background:#545454;border-radius:3px;"></div>
<div style="position:absolute;left:472.7px;top:632px;width:0.8px;height:13.2px;background:#484848;border-radius:0px;"></div>
<div style="position:absolute;left:486.6px;top:632px;width:0.8px;height:13.2px;background:#484848;border-radius:0px;"></div>
<div style="position:absolute;left:500.5px;top:632px;width:0.8px;height:13.2px;background:#484848;border-radius:0px;"></div>
<div style="position:absolute;left:514.4px;top:632px;width:0.8px;height:13.2px;background:#484848;border-radius:0px;"></div>
<div style="position:absolute;left:528.3000000000001px;top:632px;width:0.8px;height:13.2px;background:#484848;border-radius:0px;"></div>
<svg style="position:absolute;left:460.3px;top:633.2px;" width="11" height="11" viewBox="0 0 11 11"><path d="M2 1.8V9.2" stroke="#f2f2f2" stroke-width="1.5"/><path d="M9 1.8V9.2L3.4 5.5Z" fill="#f2f2f2"/></svg>
<svg style="position:absolute;left:473.7px;top:633.2px;" width="11" height="11" viewBox="0 0 11 11"><path d="M3 2.6L5.6 5.5L3 8.4L0.4 5.5Z" fill="#f2f2f2"/><path d="M10.4 2.2V8.8L6 5.5Z" fill="#f2f2f2"/></svg>
<svg style="position:absolute;left:487.8px;top:633.2px;" width="11" height="11" viewBox="0 0 11 11"><path d="M9.2 1V10L1.8 5.5Z" fill="#f2f2f2"/></svg>
<svg style="position:absolute;left:501.5px;top:633.2px;" width="11" height="11" viewBox="0 0 11 11"><path d="M1.8 1V10L9.2 5.5Z" fill="#f2f2f2"/></svg>
<svg style="position:absolute;left:515.8px;top:633.2px;" width="11" height="11" viewBox="0 0 11 11"><path d="M8 2.6L10.6 5.5L8 8.4L5.4 5.5Z" fill="#f2f2f2"/><path d="M0.6 2.2V8.8L5 5.5Z" fill="#f2f2f2"/></svg>
<svg style="position:absolute;left:530.3px;top:633.2px;" width="11" height="11" viewBox="0 0 11 11"><path d="M9 1.8V9.2" stroke="#f2f2f2" stroke-width="1.5"/><path d="M2 1.8V9.2L7.6 5.5Z" fill="#f2f2f2"/></svg>
<div style="position:absolute;left:791.4px;top:632px;width:51px;height:13.2px;background:#545454;border-radius:3px;"></div>
<div style="position:absolute;left:817.2px;top:633.32px;font-size:8.8px;line-height:10.56px;color:#e6e6e6;white-space:nowrap;-webkit-text-stroke:0.25px #e6e6e6;transform:translateX(-50%) scaleX(0.905);transform-origin:50% 50%;">1</div>
<svg style="position:absolute;left:848.6px;top:633px;" width="10.6" height="11.4" viewBox="0 0 10.6 11.4"><circle cx="5.2" cy="6.4" r="4" fill="none" stroke="#e8e8e8" stroke-width="1.3"/><path d="M5.2 4V6.6H7.4M3.8 0.8H6.6M8.4 2.2L9.6 3.4" stroke="#e8e8e8" stroke-width="1.2" fill="none"/></svg>
<div style="position:absolute;left:861.6px;top:632px;width:121px;height:13.2px;background:#545454;border-radius:3px;"></div>
<div style="position:absolute;left:922.4px;top:632px;width:0.8px;height:13.2px;background:#454545;border-radius:0px;"></div>
<div style="position:absolute;left:872px;top:633.32px;font-size:8.8px;line-height:10.56px;color:#e6e6e6;white-space:nowrap;-webkit-text-stroke:0.25px #e6e6e6;transform:scaleX(0.905);transform-origin:0 50%;">Start</div>
<div style="position:absolute;left:910.2px;top:633.32px;font-size:8.8px;line-height:10.56px;color:#e6e6e6;white-space:nowrap;-webkit-text-stroke:0.25px #e6e6e6;transform:translateX(-50%) scaleX(0.905);transform-origin:50% 50%;">1</div>
<div style="position:absolute;left:934.6px;top:633.32px;font-size:8.8px;line-height:10.56px;color:#e6e6e6;white-space:nowrap;-webkit-text-stroke:0.25px #e6e6e6;transform:scaleX(0.905);transform-origin:0 50%;">End</div>
<div style="position:absolute;left:958.8px;top:633.32px;font-size:8.8px;line-height:10.56px;color:#e6e6e6;white-space:nowrap;-webkit-text-stroke:0.25px #e6e6e6;transform:scaleX(0.905);transform-origin:0 50%;">250</div>
</body></html>
